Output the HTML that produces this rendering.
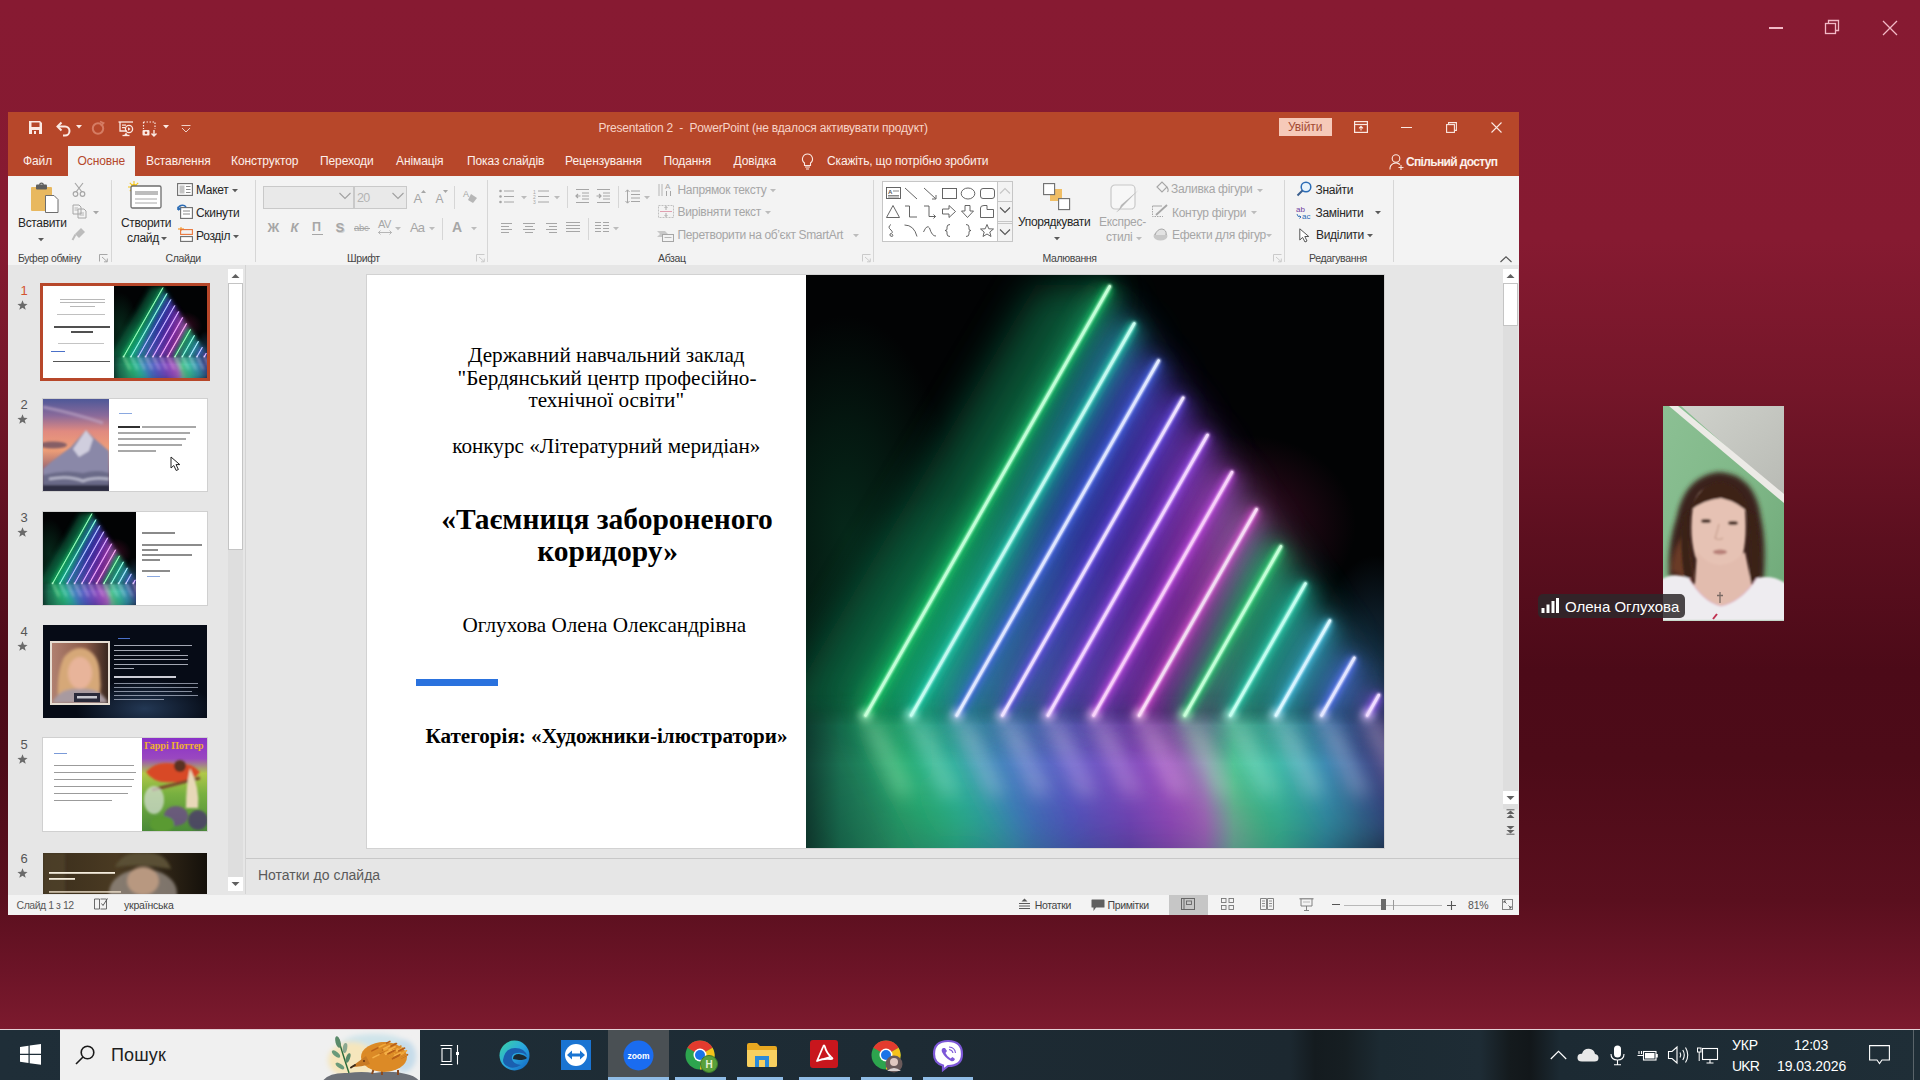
<!DOCTYPE html>
<html><head><meta charset="utf-8">
<style>
*{margin:0;padding:0;box-sizing:border-box}
html,body{width:1920px;height:1080px;overflow:hidden}
body{position:relative;font-family:"Liberation Sans",sans-serif;background:#861a31}
.a{position:absolute}
svg.a{overflow:visible}
.t{position:absolute;white-space:nowrap;line-height:1}
</style></head><body>
<div class="a" style="left:0px;top:0px;width:1920px;height:1030px;background:linear-gradient(180deg,#871a32 0px,#861a31 240px,#741629 390px,#5c0f1f 540px,#4c0a18 670px,#4d0b18 760px,#5a0f1e 900px,#6c1427 970px,#7c1a2e 1029px)"></div>
<div class="a" style="left:1769px;top:27px;width:14px;height:1.5px;background:#f2b9c6"></div>
<svg class="a" style="left:1824px;top:19px;" width="17" height="17" viewBox="0 0 17 17"><rect x="1.5" y="4.5" width="10" height="10" fill="none" stroke="#f2b9c6" stroke-width="1.3"/><path d="M4.5 4.5 V1.5 H14.5 V11.5 H11.5" fill="none" stroke="#f2b9c6" stroke-width="1.3"/></svg>
<svg class="a" style="left:1882px;top:20px;" width="16" height="16" viewBox="0 0 16 16"><path d="M1 1 L15 15 M15 1 L1 15" stroke="#f2b9c6" stroke-width="1.3"/></svg>
<div class="a" style="left:8px;top:112px;width:1511px;height:803px;background:#e6e6e6"></div>
<div class="a" style="left:8px;top:112px;width:1511px;height:64px;background:#b7472a"></div>
<svg class="a" style="left:28px;top:120px;" width="15" height="15" viewBox="0 0 15 15"><path d="M1 1 H12 L14 3 V14 H1 Z" fill="#fbe9e3"/><rect x="3.5" y="2.5" width="8" height="4.5" fill="#b7472a"/><rect x="4" y="10" width="7" height="4" fill="#b7472a"/><rect x="6" y="11" width="2" height="3" fill="#fbe9e3"/></svg>
<svg class="a" style="left:56px;top:121px;" width="15" height="15" viewBox="0 0 15 15"><path d="M2 5.5 H9 A4.5 4.5 0 0 1 9 14.5 H7" fill="none" stroke="#fbe9e3" stroke-width="2"/><path d="M5.5 1.5 L1.5 5.5 L5.5 9.5" fill="none" stroke="#fbe9e3" stroke-width="2"/></svg>
<svg class="a" style="left:76px;top:125px;" width="6" height="4" viewBox="0 0 6 4"><path d="M0 0 H6 L3 3.5 Z" fill="#fbe9e3"/></svg>
<svg class="a" style="left:91px;top:121px;opacity:.9" width="14" height="14" viewBox="0 0 14 14"><circle cx="7" cy="7.5" r="5.2" fill="none" stroke="#d9826a" stroke-width="2"/><path d="M9 0.5 L12.5 2 L10 5" fill="none" stroke="#d9826a" stroke-width="1.8"/></svg>
<svg class="a" style="left:118px;top:121px;" width="16" height="15" viewBox="0 0 16 15"><path d="M0.5 1 H15" stroke="#fbe9e3" stroke-width="1.3"/><path d="M2 1 V10 H9" fill="none" stroke="#fbe9e3" stroke-width="1.3"/><rect x="4" y="3.5" width="4" height="1.2" fill="#fbe9e3"/><rect x="4" y="6" width="3" height="1.2" fill="#fbe9e3"/><circle cx="11" cy="8" r="3.6" fill="none" stroke="#fbe9e3" stroke-width="1.3"/><path d="M10 6.3 L12.6 8 L10 9.7Z" fill="#fbe9e3"/><path d="M6 14.5 L8 11.5 L10 14.5 Z" fill="#fbe9e3"/><path d="M4.5 14.5 H11.5" stroke="#fbe9e3" stroke-width="1.3"/></svg>
<svg class="a" style="left:142px;top:121px;" width="16" height="15" viewBox="0 0 16 15"><path d="M1.5 1 V8 M1.5 1 H13 V8" fill="none" stroke="#fbe9e3" stroke-width="1.2" stroke-dasharray="1.5 1.5"/><rect x="0.5" y="9" width="7" height="5.5" rx="1" fill="#fbe9e3"/><circle cx="4" cy="11.8" r="1.3" fill="#b7472a"/><path d="M12 9 V15 M9.5 12.5 L12 15 L14.5 12.5" fill="none" stroke="#fbe9e3" stroke-width="1.4"/></svg>
<svg class="a" style="left:163px;top:125px;" width="6" height="4" viewBox="0 0 6 4"><path d="M0 0 H6 L3 3.5 Z" fill="#fbe9e3"/></svg>
<svg class="a" style="left:181px;top:125px;opacity:.85" width="10" height="8" viewBox="0 0 10 8"><path d="M0.5 0.5 H9.5" stroke="#fbe9e3" stroke-width="1"/><path d="M1 3 L5 7 L9 3" fill="none" stroke="#fbe9e3" stroke-width="1"/></svg>
<div class="t" style="left:598.5px;top:121.64px;font-size:12px;color:#f7d4c8;font-weight:400;font-family:'Liberation Sans';letter-spacing:-0.2px;">Presentation 2&nbsp; -&nbsp; PowerPoint (не вдалося активувати продукт)</div>
<div class="a" style="left:1279px;top:118px;width:53px;height:18px;background:#f6c9b9"></div>
<div class="t" style="left:1288px;top:121.34px;font-size:12px;color:#a34a33;font-weight:400;font-family:'Liberation Sans';letter-spacing:-0.1px;">Увійти</div>
<svg class="a" style="left:1354px;top:121px;" width="14" height="12" viewBox="0 0 14 12"><rect x="0.6" y="0.6" width="12.8" height="10.8" fill="none" stroke="#fbe9e3" stroke-width="1.2"/><path d="M0.6 3.5 H13.4" stroke="#fbe9e3" stroke-width="1.2"/><path d="M7 9.5 V5.5 M5 7.3 L7 5.3 L9 7.3" fill="none" stroke="#fbe9e3" stroke-width="1.1"/></svg>
<div class="a" style="left:1401px;top:127px;width:11px;height:1.2px;background:#fbe9e3"></div>
<svg class="a" style="left:1446px;top:122px;" width="11" height="11" viewBox="0 0 11 11"><rect x="0.6" y="2.6" width="7.8" height="7.8" fill="none" stroke="#fbe9e3" stroke-width="1.1"/><path d="M2.6 2.6 V0.6 H10.4 V8.4 H8.4" fill="none" stroke="#fbe9e3" stroke-width="1.1"/></svg>
<svg class="a" style="left:1491px;top:122px;" width="11" height="11" viewBox="0 0 11 11"><path d="M0.5 0.5 L10.5 10.5 M10.5 0.5 L0.5 10.5" stroke="#fbe9e3" stroke-width="1.1"/></svg>
<div class="a" style="left:68px;top:146px;width:67px;height:30px;background:#f3f3f3"></div>
<div class="t" style="left:23px;top:155.04px;font-size:12px;color:#fdf0ea;font-weight:400;font-family:'Liberation Sans';letter-spacing:-0.1px;">Файл</div>
<div class="t" style="left:77.5px;top:155.04px;font-size:12px;color:#b5482c;font-weight:400;font-family:'Liberation Sans';letter-spacing:-0.1px;">Основне</div>
<div class="t" style="left:146px;top:155.04px;font-size:12px;color:#fdf0ea;font-weight:400;font-family:'Liberation Sans';letter-spacing:-0.1px;">Вставлення</div>
<div class="t" style="left:231px;top:155.04px;font-size:12px;color:#fdf0ea;font-weight:400;font-family:'Liberation Sans';letter-spacing:-0.1px;">Конструктор</div>
<div class="t" style="left:320px;top:155.04px;font-size:12px;color:#fdf0ea;font-weight:400;font-family:'Liberation Sans';letter-spacing:-0.1px;">Переходи</div>
<div class="t" style="left:396px;top:155.04px;font-size:12px;color:#fdf0ea;font-weight:400;font-family:'Liberation Sans';letter-spacing:-0.1px;">Анімація</div>
<div class="t" style="left:467px;top:155.04px;font-size:12px;color:#fdf0ea;font-weight:400;font-family:'Liberation Sans';letter-spacing:-0.1px;">Показ слайдів</div>
<div class="t" style="left:565px;top:155.04px;font-size:12px;color:#fdf0ea;font-weight:400;font-family:'Liberation Sans';letter-spacing:-0.1px;">Рецензування</div>
<div class="t" style="left:663.5px;top:155.04px;font-size:12px;color:#fdf0ea;font-weight:400;font-family:'Liberation Sans';letter-spacing:-0.1px;">Подання</div>
<div class="t" style="left:733.5px;top:155.04px;font-size:12px;color:#fdf0ea;font-weight:400;font-family:'Liberation Sans';letter-spacing:-0.1px;">Довідка</div>
<div class="t" style="left:827px;top:155.04px;font-size:12px;color:#fdf0ea;font-weight:400;font-family:'Liberation Sans';letter-spacing:-0.15px;">Скажіть, що потрібно зробити</div>
<svg class="a" style="left:801px;top:153px;" width="13" height="17" viewBox="0 0 13 17"><path d="M6.5 1 A5 5 0 0 1 9.5 10 V12.5 H3.5 V10 A5 5 0 0 1 6.5 1 Z" fill="none" stroke="#fbe9e3" stroke-width="1.1"/><path d="M4 14 H9 M5 16 H8" stroke="#fbe9e3" stroke-width="1.1"/></svg>
<svg class="a" style="left:1389px;top:154px;" width="15" height="16" viewBox="0 0 15 16"><circle cx="7" cy="4.5" r="3.8" fill="none" stroke="#fbe9e3" stroke-width="1.1"/><path d="M1 15.5 A6 6 0 0 1 11 10.5" fill="none" stroke="#fbe9e3" stroke-width="1.1"/><path d="M9.5 13.5 H14.5 M12 11 V16" stroke="#fbe9e3" stroke-width="1.1"/></svg>
<div class="t" style="left:1406px;top:155.84px;font-size:12px;color:#fdf0ea;font-weight:700;font-family:'Liberation Sans';letter-spacing:-0.65px;">Спільний доступ</div>
<div class="a" style="left:8px;top:176px;width:1511px;height:89px;background:#f3f3f3"></div>
<svg class="a" style="left:30px;top:183px;" width="29" height="30" viewBox="0 0 29 30"><rect x="1" y="4" width="21" height="24" rx="1" fill="#e8b85f"/><rect x="6" y="1.5" width="11" height="5" rx="1" fill="#5e5e5e"/><circle cx="11.5" cy="2" r="1.8" fill="none" stroke="#5e5e5e" stroke-width="1.2"/><path d="M15.5 12.5 H24 L28 16.5 V29.5 H15.5 Z" fill="#fff" stroke="#6d6d6d" stroke-width="1"/></svg>
<div class="t" style="left:18px;top:216.64px;font-size:12px;color:#262626;font-weight:400;font-family:'Liberation Sans';letter-spacing:-0.35px;">Вставити</div>
<svg class="a" style="left:38px;top:237.5px;" width="6" height="4" viewBox="0 0 6 4"><path d="M0 0 H6 L3 3.3 Z" fill="#5a5a5a"/></svg>
<svg class="a" style="left:72px;top:182px;" width="14" height="15" viewBox="0 0 14 15"><path d="M3 1 L10 10 M11 1 L4 10" stroke="#a6a6a6" stroke-width="1.2"/><circle cx="3.5" cy="12" r="2.3" fill="none" stroke="#a6a6a6" stroke-width="1.2"/><circle cx="10.5" cy="12" r="2.3" fill="none" stroke="#a6a6a6" stroke-width="1.2"/></svg>
<svg class="a" style="left:72px;top:204px;" width="15" height="15" viewBox="0 0 15 15"><path d="M1 1 H7 L9 3 V10 H1 Z M6 5 H12 L14 7 V14 H6 Z" fill="#f3f3f3" stroke="#a6a6a6" stroke-width="1"/><path d="M2.5 4 H6 M2.5 6 H6 M7.5 9 H12 M7.5 11 H12" stroke="#a6a6a6" stroke-width="0.8"/></svg>
<svg class="a" style="left:93px;top:210.5px;" width="6" height="4" viewBox="0 0 6 4"><path d="M0 0 H6 L3 3.3 Z" fill="#a6a6a6"/></svg>
<svg class="a" style="left:72px;top:227px;opacity:.7" width="15" height="14" viewBox="0 0 15 14"><path d="M9 1 L13 5 L7 11 L3 7 Z" fill="#a6a6a6"/><path d="M3.5 7.5 L0.5 13" stroke="#a6a6a6" stroke-width="2"/></svg>
<div class="t" style="left:18px;top:253.11px;font-size:10.5px;color:#444444;font-weight:400;font-family:'Liberation Sans';letter-spacing:-0.35px;">Буфер обміну</div>
<svg class="a" style="left:99px;top:254px;opacity:.8" width="9" height="8" viewBox="0 0 9 8"><path d="M0.5 7.5 V0.5 H8.5" fill="none" stroke="#8a8a8a" stroke-width="0.9"/><path d="M3 3 L8 7.5 M8.3 4.5 V7.8 H5" fill="none" stroke="#8a8a8a" stroke-width="0.9"/></svg>
<div class="a" style="left:111px;top:180px;width:1px;height:82px;background:#d6d6d6"></div>
<svg class="a" style="left:126px;top:180px;" width="37" height="30" viewBox="0 0 37 30"><g fill="#f2c200"><circle cx="8" cy="7" r="3"/></g><path d="M8 1 V13 M2 7 H14 M3.8 2.8 L12.2 11.2 M12.2 2.8 L3.8 11.2" stroke="#f5c518" stroke-width="1.1"/><rect x="5" y="6" width="30" height="22" rx="1.5" fill="#fff" stroke="#6d6d6d" stroke-width="1.3"/><rect x="9" y="11" width="23" height="4" fill="#bdbdbd"/><path d="M9 19 H31 M9 23 H31" stroke="#a8a8a8" stroke-width="1"/></svg>
<div class="t" style="left:121px;top:216.84px;font-size:12px;color:#262626;font-weight:400;font-family:'Liberation Sans';letter-spacing:-0.3px;">Створити</div>
<div class="t" style="left:127px;top:232.24px;font-size:12px;color:#262626;font-weight:400;font-family:'Liberation Sans';letter-spacing:-0.3px;">слайд</div>
<svg class="a" style="left:161px;top:236.5px;" width="6" height="4" viewBox="0 0 6 4"><path d="M0 0 H6 L3 3.3 Z" fill="#5a5a5a"/></svg>
<svg class="a" style="left:177px;top:183px;" width="16" height="13" viewBox="0 0 16 13"><rect x="0.6" y="0.6" width="14.8" height="11.8" fill="#fff" stroke="#6d6d6d" stroke-width="1.1"/><rect x="2.5" y="2.5" width="5" height="8" fill="#c4c4c4"/><path d="M9 3.5 H13.5 M9 6.5 H13.5 M9 9.5 H13.5" stroke="#8a8a8a" stroke-width="1"/></svg>
<div class="t" style="left:196px;top:184.04px;font-size:12px;color:#262626;font-weight:400;font-family:'Liberation Sans';letter-spacing:-0.3px;">Макет</div>
<svg class="a" style="left:231.5px;top:188.5px;" width="6" height="4" viewBox="0 0 6 4"><path d="M0 0 H6 L3 3.3 Z" fill="#5a5a5a"/></svg>
<svg class="a" style="left:177px;top:204px;" width="16" height="15" viewBox="0 0 16 15"><rect x="3.6" y="3.6" width="11.8" height="10.8" fill="#fff" stroke="#6d6d6d" stroke-width="1.1"/><path d="M6 7 H13 M6 10 H13" stroke="#8a8a8a" stroke-width="1"/><path d="M1 6 A4.5 4.5 0 0 1 9 3" fill="none" stroke="#2b6cb5" stroke-width="1.6"/><path d="M0 2.5 L1.2 6.8 L4.5 5" fill="#2b6cb5"/></svg>
<div class="t" style="left:196px;top:206.84px;font-size:12px;color:#262626;font-weight:400;font-family:'Liberation Sans';letter-spacing:-0.3px;">Скинути</div>
<svg class="a" style="left:177px;top:227px;" width="16" height="15" viewBox="0 0 16 15"><path d="M1 2 H7" stroke="#f29b30" stroke-width="1.2"/><path d="M4 0 V4" stroke="#f29b30" stroke-width="1.1"/><rect x="3.6" y="2.6" width="11.8" height="4.8" fill="none" stroke="#e8763a" stroke-width="1.1"/><rect x="3.6" y="9.6" width="11.8" height="4.8" fill="#fff" stroke="#6d6d6d" stroke-width="1.1"/></svg>
<div class="t" style="left:196px;top:229.64px;font-size:12px;color:#262626;font-weight:400;font-family:'Liberation Sans';letter-spacing:-0.3px;">Розділ</div>
<svg class="a" style="left:233px;top:234.5px;" width="6" height="4" viewBox="0 0 6 4"><path d="M0 0 H6 L3 3.3 Z" fill="#5a5a5a"/></svg>
<div class="t" style="left:165.5px;top:253.11px;font-size:10.5px;color:#444444;font-weight:400;font-family:'Liberation Sans';letter-spacing:-0.35px;">Слайди</div>
<div class="a" style="left:254.5px;top:180px;width:1px;height:82px;background:#d6d6d6"></div>
<div class="a" style="left:263px;top:186px;width:91px;height:23px;background:#e9e9e9;border:1px solid #c9c9c9"></div>
<div class="a" style="left:354px;top:186px;width:53px;height:23px;background:#e9e9e9;border:1px solid #c9c9c9;border-left:none"></div>
<div class="a" style="left:354px;top:187px;width:1px;height:21px;background:#c9c9c9"></div>
<svg class="a" style="left:339px;top:192px;" width="12" height="8" viewBox="0 0 12 8"><path d="M0.5 1 L6 6.5 L11.5 1" fill="none" stroke="#a0a0a0" stroke-width="1.1"/></svg>
<svg class="a" style="left:392px;top:192px;" width="12" height="8" viewBox="0 0 12 8"><path d="M0.5 1 L6 6.5 L11.5 1" fill="none" stroke="#a0a0a0" stroke-width="1.1"/></svg>
<div class="t" style="left:357px;top:192.42px;font-size:12.5px;color:#b4b4b4;font-weight:400;font-family:'Liberation Sans';letter-spacing:-0.6px;">20</div>
<div class="t" style="left:413.5px;top:192.00px;font-size:13px;color:#a6a6a6;font-weight:400;font-family:'Liberation Sans';">A</div>
<svg class="a" style="left:421px;top:190px;" width="5" height="3" viewBox="0 0 5 3"><path d="M0 3 L2.5 0 L5 3Z" fill="#a6a6a6"/></svg>
<div class="t" style="left:435.5px;top:192.84px;font-size:12px;color:#a6a6a6;font-weight:400;font-family:'Liberation Sans';">A</div>
<svg class="a" style="left:443px;top:190px;" width="5" height="3" viewBox="0 0 5 3"><path d="M0 0 L2.5 3 L5 0Z" fill="#a6a6a6"/></svg>
<div class="a" style="left:454px;top:186px;width:1px;height:23px;background:#d6d6d6"></div>
<svg class="a" style="left:463px;top:189px;" width="15" height="15" viewBox="0 0 15 15"><text x="0" y="8" font-size="9" fill="#a6a6a6" font-family="Liberation Sans">A</text><path d="M8 5 L14 9 L10 14 L5 11 Z" fill="#a6a6a6" opacity=".8"/></svg>
<div class="t" style="left:267.5px;top:221.00px;font-size:13px;color:#a6a6a6;font-weight:700;font-family:'Liberation Sans';">Ж</div>
<div class="t" style="left:290.5px;top:221.00px;font-size:13px;color:#a6a6a6;font-weight:700;font-family:'Liberation Sans';font-style:italic">К</div>
<div class="t" style="left:312px;top:220.92px;font-size:12.5px;color:#a6a6a6;font-weight:700;font-family:'Liberation Sans';">П</div>
<div class="a" style="left:312px;top:233.5px;width:11px;height:1px;background:#a6a6a6"></div>
<div class="t" style="left:335.5px;top:221.00px;font-size:13px;color:#a6a6a6;font-weight:700;font-family:'Liberation Sans';text-shadow:1px 1px 0 #d0d0d0">S</div>
<div class="t" style="left:354px;top:222.96px;font-size:9.5px;color:#a6a6a6;font-weight:400;font-family:'Liberation Sans';letter-spacing:-0.3px;">abc</div>
<div class="a" style="left:354px;top:227.5px;width:16px;height:1px;background:#a6a6a6"></div>
<div class="t" style="left:378px;top:219.19px;font-size:11px;color:#a6a6a6;font-weight:400;font-family:'Liberation Sans';letter-spacing:-0.5px;">AV</div>
<svg class="a" style="left:378px;top:230px;" width="14" height="5" viewBox="0 0 14 5"><path d="M0.5 2.5 H13.5 M2.5 0.5 L0.5 2.5 L2.5 4.5 M11.5 0.5 L13.5 2.5 L11.5 4.5" fill="none" stroke="#a6a6a6" stroke-width="0.8"/></svg>
<svg class="a" style="left:395px;top:226.5px;" width="6" height="4" viewBox="0 0 6 4"><path d="M0 0 H6 L3 3.3 Z" fill="#bcbcbc"/></svg>
<div class="t" style="left:410px;top:221.00px;font-size:13px;color:#a6a6a6;font-weight:400;font-family:'Liberation Sans';letter-spacing:-0.8px;">Aa</div>
<svg class="a" style="left:429px;top:226.5px;" width="6" height="4" viewBox="0 0 6 4"><path d="M0 0 H6 L3 3.3 Z" fill="#bcbcbc"/></svg>
<div class="a" style="left:442px;top:218px;width:1px;height:22px;background:#d6d6d6"></div>
<div class="t" style="left:452px;top:219.65px;font-size:14px;color:#a6a6a6;font-weight:700;font-family:'Liberation Sans';">A</div>
<svg class="a" style="left:471px;top:226.5px;" width="6" height="4" viewBox="0 0 6 4"><path d="M0 0 H6 L3 3.3 Z" fill="#bcbcbc"/></svg>
<div class="t" style="left:347px;top:252.71px;font-size:10.5px;color:#444444;font-weight:400;font-family:'Liberation Sans';letter-spacing:-0.35px;">Шрифт</div>
<svg class="a" style="left:476px;top:254px;opacity:.8" width="9" height="8" viewBox="0 0 9 8"><path d="M0.5 7.5 V0.5 H8.5" fill="none" stroke="#bbbbbb" stroke-width="0.9"/><path d="M3 3 L8 7.5 M8.3 4.5 V7.8 H5" fill="none" stroke="#bbbbbb" stroke-width="0.9"/></svg>
<div class="a" style="left:487px;top:180px;width:1px;height:82px;background:#d6d6d6"></div>
<svg class="a" style="left:499px;top:189px;" width="16" height="15" viewBox="0 0 16 15"><g fill="#a6a6a6"><circle cx="1.5" cy="2" r="1.3"/><circle cx="1.5" cy="7.5" r="1.3"/><circle cx="1.5" cy="13" r="1.3"/></g><path d="M5 2 H15 M5 7.5 H15 M5 13 H15" stroke="#a6a6a6" stroke-width="1"/></svg>
<svg class="a" style="left:521px;top:195.5px;" width="6" height="4" viewBox="0 0 6 4"><path d="M0 0 H6 L3 3.3 Z" fill="#bcbcbc"/></svg>
<svg class="a" style="left:533px;top:189px;" width="17" height="15" viewBox="0 0 17 15"><text x="0" y="4.5" font-size="5" fill="#a6a6a6">1</text><text x="0" y="10" font-size="5" fill="#a6a6a6">2</text><text x="0" y="15" font-size="5" fill="#a6a6a6">3</text><path d="M5 2 H16 M5 7.5 H16 M5 13 H16" stroke="#a6a6a6" stroke-width="1"/></svg>
<svg class="a" style="left:554px;top:195.5px;" width="6" height="4" viewBox="0 0 6 4"><path d="M0 0 H6 L3 3.3 Z" fill="#bcbcbc"/></svg>
<div class="a" style="left:567px;top:186px;width:1px;height:22px;background:#d6d6d6"></div>
<svg class="a" style="left:575px;top:189px;" width="15" height="14" viewBox="0 0 15 14"><path d="M1 0.5 H14 M7 4 H14 M7 7 H14 M7 10 H14 M1 13.5 H14" stroke="#a6a6a6" stroke-width="1"/><path d="M5.5 7 H1 M3 5 L1 7 L3 9" fill="none" stroke="#a6a6a6" stroke-width="1.2"/></svg>
<svg class="a" style="left:596px;top:189px;" width="15" height="14" viewBox="0 0 15 14"><path d="M1 0.5 H14 M7 4 H14 M7 7 H14 M7 10 H14 M1 13.5 H14" stroke="#a6a6a6" stroke-width="1"/><path d="M0.5 7 H5 M3 5 L5 7 L3 9" fill="none" stroke="#a6a6a6" stroke-width="1.2"/></svg>
<div class="a" style="left:618px;top:186px;width:1px;height:22px;background:#d6d6d6"></div>
<svg class="a" style="left:625px;top:189px;" width="15" height="15" viewBox="0 0 15 15"><path d="M6 2 H15 M6 5.5 H15 M6 9 H15 M6 12.5 H15" stroke="#a6a6a6" stroke-width="1"/><path d="M2.5 1 V14 M0.5 3 L2.5 0.8 L4.5 3 M0.5 12 L2.5 14.2 L4.5 12" fill="none" stroke="#a6a6a6" stroke-width="1"/></svg>
<svg class="a" style="left:644px;top:195.5px;" width="6" height="4" viewBox="0 0 6 4"><path d="M0 0 H6 L3 3.3 Z" fill="#bcbcbc"/></svg>
<svg class="a" style="left:501px;top:223px;" width="12" height="10" viewBox="0 0 12 10"><path d="M0 0.5 H11 M0 3.5 H8 M0 6.5 H11 M0 9.5 H8" stroke="#a6a6a6" stroke-width="1"/></svg>
<svg class="a" style="left:523px;top:223px;" width="12" height="10" viewBox="0 0 12 10"><path d="M0 0.5 H12 M2 3.5 H10 M0 6.5 H12 M2 9.5 H10" stroke="#a6a6a6" stroke-width="1"/></svg>
<svg class="a" style="left:545px;top:223px;" width="12" height="10" viewBox="0 0 12 10"><path d="M1 0.5 H12 M4 3.5 H12 M1 6.5 H12 M4 9.5 H12" stroke="#a6a6a6" stroke-width="1"/></svg>
<svg class="a" style="left:566px;top:222px;" width="14" height="12" viewBox="0 0 14 12"><path d="M0 0.5 H14 M0 3.5 H14 M0 6.5 H14 M0 9.5 H14" stroke="#a6a6a6" stroke-width="1"/></svg>
<div class="a" style="left:588px;top:218px;width:1px;height:22px;background:#d6d6d6"></div>
<svg class="a" style="left:595px;top:222px;" width="14" height="12" viewBox="0 0 14 12"><path d="M0 0.5 H6 M8 0.5 H14 M0 3.5 H6 M8 3.5 H14 M0 6.5 H6 M8 6.5 H14 M0 9.5 H6 M8 9.5 H14" stroke="#a6a6a6" stroke-width="1"/></svg>
<svg class="a" style="left:613px;top:226.5px;" width="6" height="4" viewBox="0 0 6 4"><path d="M0 0 H6 L3 3.3 Z" fill="#bcbcbc"/></svg>
<svg class="a" style="left:658px;top:181px;" width="16" height="16" viewBox="0 0 16 16"><path d="M1 3 V15 M4 3 V15" stroke="#c0c0c0" stroke-width="1.2"/><text x="7" y="8" font-size="8" fill="#a6a6a6">A</text><path d="M8.5 10 V15 M12.5 10 V15" stroke="#a6a6a6" stroke-width="1"/></svg>
<div class="t" style="left:677.5px;top:183.84px;font-size:12px;color:#a6a6a6;font-weight:400;font-family:'Liberation Sans';letter-spacing:-0.3px;">Напрямок тексту</div>
<svg class="a" style="left:770px;top:188.5px;" width="6" height="4" viewBox="0 0 6 4"><path d="M0 0 H6 L3 3.3 Z" fill="#bcbcbc"/></svg>
<svg class="a" style="left:658px;top:205px;" width="16" height="13" viewBox="0 0 16 13"><rect x="0.5" y="0.5" width="15" height="12" fill="none" stroke="#c0c0c0" stroke-width="1" stroke-dasharray="2 1"/><path d="M2 6.5 H14" stroke="#e0a0b0" stroke-width="1"/><path d="M8 1.5 V5 M6.5 3 L8 1.5 L9.5 3 M8 8 V11.5 M6.5 10 L8 11.5 L9.5 10" fill="none" stroke="#a6a6a6" stroke-width="0.9"/></svg>
<div class="t" style="left:677.5px;top:206.44px;font-size:12px;color:#a6a6a6;font-weight:400;font-family:'Liberation Sans';letter-spacing:-0.3px;">Вирівняти текст</div>
<svg class="a" style="left:765px;top:210.5px;" width="6" height="4" viewBox="0 0 6 4"><path d="M0 0 H6 L3 3.3 Z" fill="#bcbcbc"/></svg>
<svg class="a" style="left:657px;top:229px;" width="17" height="13" viewBox="0 0 17 13"><path d="M0 2 H8 L11 5 L8 8 H0 L3 5 Z" fill="#c8c8c8"/><rect x="5.5" y="5.5" width="11" height="7" fill="#f3f3f3" stroke="#a6a6a6" stroke-width="1"/><path d="M7.5 8.5 H14.5" stroke="#a6a6a6" stroke-width="0.8"/></svg>
<div class="t" style="left:677.5px;top:228.84px;font-size:12px;color:#a6a6a6;font-weight:400;font-family:'Liberation Sans';letter-spacing:-0.35px;">Перетворити на об’єкт SmartArt</div>
<svg class="a" style="left:853px;top:233.5px;" width="6" height="4" viewBox="0 0 6 4"><path d="M0 0 H6 L3 3.3 Z" fill="#bcbcbc"/></svg>
<div class="t" style="left:658px;top:253.11px;font-size:10.5px;color:#444444;font-weight:400;font-family:'Liberation Sans';letter-spacing:-0.35px;">Абзац</div>
<svg class="a" style="left:862px;top:254px;opacity:.8" width="9" height="8" viewBox="0 0 9 8"><path d="M0.5 7.5 V0.5 H8.5" fill="none" stroke="#bbbbbb" stroke-width="0.9"/><path d="M3 3 L8 7.5 M8.3 4.5 V7.8 H5" fill="none" stroke="#bbbbbb" stroke-width="0.9"/></svg>
<div class="a" style="left:873px;top:180px;width:1px;height:82px;background:#d6d6d6"></div>
<div class="a" style="left:882px;top:181px;width:131px;height:61px;background:#fff;border:1px solid #c6c6c6"></div>
<div class="a" style="left:997px;top:181px;width:16px;height:61px;background:#f3f3f3;border:1px solid #c6c6c6"></div>
<div class="a" style="left:997px;top:201px;width:16px;height:1px;background:#c6c6c6"></div>
<div class="a" style="left:997px;top:221px;width:16px;height:1px;background:#c6c6c6"></div>
<div class="a" style="left:997px;top:223px;width:16px;height:1px;background:#c6c6c6"></div>
<svg class="a" style="left:999px;top:187px;" width="12" height="8" viewBox="0 0 12 8"><path d="M1 6.5 L6 1.5 L11 6.5" fill="none" stroke="#c6c6c6" stroke-width="1.1"/></svg>
<svg class="a" style="left:999px;top:206px;" width="12" height="8" viewBox="0 0 12 8"><path d="M1 1.5 L6 6.5 L11 1.5" fill="none" stroke="#555" stroke-width="1.1"/></svg>
<svg class="a" style="left:999px;top:228px;" width="12" height="8" viewBox="0 0 12 8"><path d="M1 1.5 L6 6.5 L11 1.5" fill="none" stroke="#555" stroke-width="1.1"/></svg>
<svg class="a" style="left:885.5px;top:187px;" width="15" height="13" viewBox="0 0 15 13"><rect x="0.5" y="0.5" width="14" height="11" fill="none" stroke="#555555" stroke-width="0.9"/><text x="2" y="6.5" font-size="6" fill="#555555" font-weight="700">A</text><path d="M7 4 H13 M2 8.5 H13 M2 10 H13" stroke="#555555" stroke-width="0.7"/></svg>
<svg class="a" style="left:885.5px;top:205px;" width="15" height="14" viewBox="0 0 15 14"><path d="M7 0.5 L13.5 12.5 H0.5 Z" fill="none" stroke="#555555" stroke-width="0.9"/></svg>
<svg class="a" style="left:885.5px;top:224px;" width="15" height="14" viewBox="0 0 15 14"><path d="M5 0.5 Q1 3 5 6 Q8 9 4 10 Q3 12 6 12.5 Q8 12 6 10" fill="none" stroke="#555555" stroke-width="0.9"/></svg>
<svg class="a" style="left:904px;top:187px;" width="15" height="13" viewBox="0 0 15 13"><path d="M1 1 L13 12" stroke="#555555" stroke-width="0.9"/></svg>
<svg class="a" style="left:904px;top:205px;" width="15" height="14" viewBox="0 0 15 14"><path d="M1 1 H5.5 V12 H13" fill="none" stroke="#555555" stroke-width="0.9"/></svg>
<svg class="a" style="left:904px;top:224px;" width="15" height="14" viewBox="0 0 15 14"><path d="M0.5 1 Q10 1 13 12.5" fill="none" stroke="#555555" stroke-width="0.9"/></svg>
<svg class="a" style="left:923px;top:187px;" width="15" height="13" viewBox="0 0 15 13"><path d="M1 1 L12.5 11.5" stroke="#555555" stroke-width="0.9"/><path d="M9 12 H13 V8" fill="none" stroke="#555555" stroke-width="0.9"/></svg>
<svg class="a" style="left:923px;top:205px;" width="15" height="14" viewBox="0 0 15 14"><path d="M1 1 H6 V11.5 H12.5 M10.5 9.5 L12.5 11.5 L10.5 13.5" fill="none" stroke="#555555" stroke-width="0.9"/></svg>
<svg class="a" style="left:923px;top:224px;" width="15" height="14" viewBox="0 0 15 14"><path d="M0.5 8 Q4 0 6.5 4 Q9 12.5 13 12" fill="none" stroke="#555555" stroke-width="0.9"/></svg>
<svg class="a" style="left:941.75px;top:187px;" width="15" height="13" viewBox="0 0 15 13"><rect x="0.5" y="1.5" width="14" height="10" fill="none" stroke="#555555" stroke-width="0.9"/></svg>
<svg class="a" style="left:941.75px;top:205px;" width="15" height="14" viewBox="0 0 15 14"><path d="M0.5 4 H7 V0.5 L13.5 6.5 L7 12.5 V9 H0.5 Z" fill="none" stroke="#555555" stroke-width="0.9"/></svg>
<svg class="a" style="left:941.75px;top:224px;" width="15" height="14" viewBox="0 0 15 14"><path d="M8 0.5 Q5 0.5 5 3 V5 Q5 6.5 3 6.5 Q5 6.5 5 8 V10 Q5 12.5 8 12.5" fill="none" stroke="#555555" stroke-width="0.9"/></svg>
<svg class="a" style="left:961px;top:187px;" width="15" height="13" viewBox="0 0 15 13"><ellipse cx="7" cy="6.5" rx="6.8" ry="5.5" fill="none" stroke="#555555" stroke-width="0.9"/></svg>
<svg class="a" style="left:961px;top:205px;" width="15" height="14" viewBox="0 0 15 14"><path d="M4 0.5 H9 V6 H12.5 L6.5 12.5 L0.5 6 H4 Z" fill="none" stroke="#555555" stroke-width="0.9"/></svg>
<svg class="a" style="left:961px;top:224px;" width="15" height="14" viewBox="0 0 15 14"><path d="M5 0.5 Q8 0.5 8 3 V5 Q8 6.5 10 6.5 Q8 6.5 8 8 V10 Q8 12.5 5 12.5" fill="none" stroke="#555555" stroke-width="0.9"/></svg>
<svg class="a" style="left:980px;top:187px;" width="15" height="13" viewBox="0 0 15 13"><rect x="0.5" y="1.5" width="14" height="10" rx="2.5" fill="none" stroke="#555555" stroke-width="0.9"/></svg>
<svg class="a" style="left:980px;top:205px;" width="15" height="14" viewBox="0 0 15 14"><path d="M0.5 12.5 V3 Q0.5 0.5 4 0.5 H7 V4.5 H13.5 V12.5 Z" fill="none" stroke="#555555" stroke-width="0.9"/></svg>
<svg class="a" style="left:980px;top:224px;" width="15" height="14" viewBox="0 0 15 14"><path d="M7 0.5 L8.8 4.8 L13.5 5 L9.8 8 L11 12.5 L7 10 L3 12.5 L4.2 8 L0.5 5 L5.2 4.8 Z" fill="none" stroke="#555555" stroke-width="0.9"/></svg>
<svg class="a" style="left:1043px;top:183px;" width="28" height="28" viewBox="0 0 28 28"><rect x="7" y="6" width="12" height="12" fill="#f0be65"/><rect x="0.6" y="0.6" width="11" height="11" fill="#fff" stroke="#6d6d6d" stroke-width="1.1"/><rect x="15.6" y="15.6" width="11" height="11" fill="#fff" stroke="#6d6d6d" stroke-width="1.1"/></svg>
<div class="t" style="left:1018px;top:216.44px;font-size:12px;color:#262626;font-weight:400;font-family:'Liberation Sans';letter-spacing:-0.35px;">Упорядкувати</div>
<svg class="a" style="left:1054px;top:236.5px;" width="6" height="4" viewBox="0 0 6 4"><path d="M0 0 H6 L3 3.3 Z" fill="#5a5a5a"/></svg>
<svg class="a" style="left:1110px;top:184px;" width="30" height="29" viewBox="0 0 30 29"><rect x="1" y="1" width="24" height="24" rx="4" fill="#f7f7f7" stroke="#c8c8c8" stroke-width="1.2"/><path d="M28.5 6 L13 22 Q9 27 6 28.5 Q10 25 11 21 Z" fill="#b8b8b8"/></svg>
<div class="t" style="left:1099px;top:216.44px;font-size:12px;color:#a6a6a6;font-weight:400;font-family:'Liberation Sans';letter-spacing:-0.3px;">Експрес-</div>
<div class="t" style="left:1106px;top:231.44px;font-size:12px;color:#a6a6a6;font-weight:400;font-family:'Liberation Sans';letter-spacing:-0.3px;">стилі</div>
<svg class="a" style="left:1136px;top:236.5px;" width="6" height="4" viewBox="0 0 6 4"><path d="M0 0 H6 L3 3.3 Z" fill="#bcbcbc"/></svg>
<svg class="a" style="left:1154px;top:181px;" width="15" height="14" viewBox="0 0 15 14"><path d="M3 6 L8 1 L13 6 L8 11 Z" fill="none" stroke="#a6a6a6" stroke-width="1.1"/><path d="M13 6 Q15 9 13.5 11" fill="none" stroke="#a6a6a6" stroke-width="1.1"/></svg>
<div class="t" style="left:1171px;top:182.84px;font-size:12px;color:#a6a6a6;font-weight:400;font-family:'Liberation Sans';letter-spacing:-0.3px;">Заливка фігури</div>
<svg class="a" style="left:1257px;top:188.5px;" width="6" height="4" viewBox="0 0 6 4"><path d="M0 0 H6 L3 3.3 Z" fill="#bcbcbc"/></svg>
<svg class="a" style="left:1152px;top:204px;" width="16" height="13" viewBox="0 0 16 13"><path d="M0.5 2 V12.5 H11" fill="none" stroke="#a6a6a6" stroke-width="1" stroke-dasharray="1.5 1"/><path d="M0.5 2 H10" stroke="#a6a6a6" stroke-width="1"/><path d="M4 11 L15 1" stroke="#a6a6a6" stroke-width="1.8"/></svg>
<div class="t" style="left:1172px;top:206.84px;font-size:12px;color:#a6a6a6;font-weight:400;font-family:'Liberation Sans';letter-spacing:-0.3px;">Контур фігури</div>
<svg class="a" style="left:1251px;top:210.5px;" width="6" height="4" viewBox="0 0 6 4"><path d="M0 0 H6 L3 3.3 Z" fill="#bcbcbc"/></svg>
<svg class="a" style="left:1153px;top:228px;" width="15" height="13" viewBox="0 0 15 13"><ellipse cx="7.5" cy="8" rx="7" ry="4.5" fill="#c8c8c8"/><path d="M2 7 Q4 1 9 1 Q14 2 13 7" fill="#e2e2e2" stroke="#a6a6a6" stroke-width="1"/></svg>
<div class="t" style="left:1172px;top:228.84px;font-size:12px;color:#a6a6a6;font-weight:400;font-family:'Liberation Sans';letter-spacing:-0.3px;">Ефекти для фігур</div>
<svg class="a" style="left:1266px;top:233.5px;" width="6" height="4" viewBox="0 0 6 4"><path d="M0 0 H6 L3 3.3 Z" fill="#bcbcbc"/></svg>
<div class="t" style="left:1042.5px;top:253.11px;font-size:10.5px;color:#444444;font-weight:400;font-family:'Liberation Sans';letter-spacing:-0.35px;">Малювання</div>
<svg class="a" style="left:1273px;top:254px;opacity:.8" width="9" height="8" viewBox="0 0 9 8"><path d="M0.5 7.5 V0.5 H8.5" fill="none" stroke="#bbbbbb" stroke-width="0.9"/><path d="M3 3 L8 7.5 M8.3 4.5 V7.8 H5" fill="none" stroke="#bbbbbb" stroke-width="0.9"/></svg>
<div class="a" style="left:1284px;top:180px;width:1px;height:82px;background:#d6d6d6"></div>
<svg class="a" style="left:1296px;top:181px;" width="16" height="16" viewBox="0 0 16 16"><circle cx="10" cy="6" r="4.8" fill="#e8f3fb" stroke="#2b6cb5" stroke-width="1.5"/><path d="M6.5 9.5 L1.5 14.5" stroke="#3b5f8f" stroke-width="2"/></svg>
<div class="t" style="left:1315.5px;top:183.84px;font-size:12px;color:#262626;font-weight:400;font-family:'Liberation Sans';letter-spacing:-0.3px;">Знайти</div>
<svg class="a" style="left:1296px;top:205px;" width="17" height="14" viewBox="0 0 17 14"><text x="0" y="6.5" font-size="8" fill="#7040a0" font-family="Liberation Sans">ab</text><text x="6" y="13.5" font-size="8" fill="#2b6cb5" font-family="Liberation Sans">ac</text><path d="M1 9 Q1 12 5 12 M3.5 10.5 L5 12 L3.5 13.5" fill="none" stroke="#2b6cb5" stroke-width="0.9"/></svg>
<div class="t" style="left:1315.5px;top:206.84px;font-size:12px;color:#262626;font-weight:400;font-family:'Liberation Sans';letter-spacing:-0.3px;">Замінити</div>
<svg class="a" style="left:1375px;top:210.5px;" width="6" height="4" viewBox="0 0 6 4"><path d="M0 0 H6 L3 3.3 Z" fill="#5a5a5a"/></svg>
<svg class="a" style="left:1299px;top:228px;" width="11" height="15" viewBox="0 0 11 15"><path d="M0.8 0.8 V12 L3.6 9.4 L6 14 L8 13 L5.8 8.5 H9.8 Z" fill="#fff" stroke="#555" stroke-width="1"/></svg>
<div class="t" style="left:1316px;top:228.84px;font-size:12px;color:#262626;font-weight:400;font-family:'Liberation Sans';letter-spacing:-0.3px;">Виділити</div>
<svg class="a" style="left:1367px;top:233.5px;" width="6" height="4" viewBox="0 0 6 4"><path d="M0 0 H6 L3 3.3 Z" fill="#5a5a5a"/></svg>
<div class="t" style="left:1309px;top:253.11px;font-size:10.5px;color:#444444;font-weight:400;font-family:'Liberation Sans';letter-spacing:-0.35px;">Редагування</div>
<div class="a" style="left:1392.5px;top:180px;width:1px;height:82px;background:#d6d6d6"></div>
<svg class="a" style="left:1500px;top:256px;" width="12" height="7" viewBox="0 0 12 7"><path d="M0.5 6 L6 0.8 L11.5 6" fill="none" stroke="#555" stroke-width="1.1"/></svg>
<svg width="0" height="0" style="position:absolute"><defs><filter id="b20" filterUnits="userSpaceOnUse" x="-100" y="-100" width="800" height="800"><feGaussianBlur stdDeviation="18"/></filter><filter id="b10" filterUnits="userSpaceOnUse" x="-100" y="-100" width="800" height="800"><feGaussianBlur stdDeviation="9"/></filter><filter id="b4" filterUnits="userSpaceOnUse" x="-100" y="-100" width="800" height="800"><feGaussianBlur stdDeviation="3.5"/></filter><filter id="b2" filterUnits="userSpaceOnUse" x="-100" y="-100" width="800" height="800"><feGaussianBlur stdDeviation="1.3"/></filter><radialGradient id="gGreen"><stop offset="0" stop-color="#0e5a3a" stop-opacity="1"/><stop offset="0.5" stop-color="#0e5a3a" stop-opacity="0.55"/><stop offset="1" stop-color="#0e5a3a" stop-opacity="0"/></radialGradient><radialGradient id="gGreen2"><stop offset="0" stop-color="#06281a" stop-opacity="1"/><stop offset="0.5" stop-color="#06281a" stop-opacity="0.55"/><stop offset="1" stop-color="#06281a" stop-opacity="0"/></radialGradient><radialGradient id="gBlue"><stop offset="0" stop-color="#2a2ab8" stop-opacity="0.9"/><stop offset="0.5" stop-color="#2a2ab8" stop-opacity="0.49500000000000005"/><stop offset="1" stop-color="#2a2ab8" stop-opacity="0"/></radialGradient><radialGradient id="gPurp"><stop offset="0" stop-color="#7a2aa8" stop-opacity="0.8"/><stop offset="0.5" stop-color="#7a2aa8" stop-opacity="0.44000000000000006"/><stop offset="1" stop-color="#7a2aa8" stop-opacity="0"/></radialGradient><radialGradient id="gRed"><stop offset="0" stop-color="#3a0c22" stop-opacity="0.9"/><stop offset="0.5" stop-color="#3a0c22" stop-opacity="0.49500000000000005"/><stop offset="1" stop-color="#3a0c22" stop-opacity="0"/></radialGradient><radialGradient id="gTeal"><stop offset="0" stop-color="#1a7a66" stop-opacity="0.8"/><stop offset="0.5" stop-color="#1a7a66" stop-opacity="0.44000000000000006"/><stop offset="1" stop-color="#1a7a66" stop-opacity="0"/></radialGradient><radialGradient id="gSlate"><stop offset="0" stop-color="#1a3a50" stop-opacity="0.8"/><stop offset="0.5" stop-color="#1a3a50" stop-opacity="0.44000000000000006"/><stop offset="1" stop-color="#1a3a50" stop-opacity="0"/></radialGradient><radialGradient id="gHor"><stop offset="0" stop-color="#8ae0d0" stop-opacity="0.55"/><stop offset="0.5" stop-color="#8ae0d0" stop-opacity="0.30250000000000005"/><stop offset="1" stop-color="#8ae0d0" stop-opacity="0"/></radialGradient><linearGradient id="floorg" x1="0" y1="0" x2="1" y2="0"><stop offset="0" stop-color="#103e32"/><stop offset="0.06" stop-color="#1a7052"/><stop offset="0.16" stop-color="#2a9a6c"/><stop offset="0.26" stop-color="#30a08c"/><stop offset="0.36" stop-color="#3a86a8"/><stop offset="0.46" stop-color="#4660b0"/><stop offset="0.56" stop-color="#5a48a8"/><stop offset="0.63" stop-color="#7a50b0"/><stop offset="0.69" stop-color="#8a70b8"/><stop offset="0.74" stop-color="#58b898"/><stop offset="0.82" stop-color="#40a898"/><stop offset="0.9" stop-color="#2e7090"/><stop offset="0.96" stop-color="#23405a"/><stop offset="1" stop-color="#1a2a3a"/></linearGradient><linearGradient id="floorm" x1="0" y1="0" x2="0" y2="1"><stop offset="0" stop-color="#fff" stop-opacity="0"/><stop offset="0.1" stop-color="#fff" stop-opacity="0.2"/><stop offset="0.2" stop-color="#fff" stop-opacity="0.8"/><stop offset="0.45" stop-color="#fff" stop-opacity="1"/><stop offset="1" stop-color="#fff" stop-opacity="0.85"/></linearGradient><mask id="fmask" maskUnits="userSpaceOnUse" x="0" y="420" width="578" height="153"><rect x="0" y="420" width="578" height="153" fill="url(#floorm)"/></mask></defs><symbol id="neon" viewBox="0 0 578 573" preserveAspectRatio="none"><rect width="578" height="573" fill="#020304"/><ellipse cx="150" cy="420" rx="200" ry="200" fill="url(#gGreen)"/><ellipse cx="40" cy="260" rx="110" ry="220" fill="url(#gGreen2)"/><ellipse cx="440" cy="250" rx="110" ry="90" fill="url(#gRed)"/><ellipse cx="570" cy="400" rx="60" ry="120" fill="url(#gSlate)"/><linearGradient id="hazeg" x1="0" y1="0" x2="1" y2="0"><stop offset="0" stop-color="#17a070"/><stop offset="0.22" stop-color="#1aa080"/><stop offset="0.32" stop-color="#2a7a9a"/><stop offset="0.42" stop-color="#2a40c0"/><stop offset="0.55" stop-color="#4a2ab8"/><stop offset="0.66" stop-color="#8a30b0"/><stop offset="0.75" stop-color="#2aa088"/><stop offset="0.88" stop-color="#2a8a9a"/><stop offset="1" stop-color="#2a4a7a"/></linearGradient><polygon points="40,450 300,20 578,430 578,450" fill="url(#hazeg)" opacity="0.55" filter="url(#b20)"/><polygon points="-30,450 70,450 305,10 230,10" fill="#0e7048" opacity="0.6" filter="url(#b20)"/><g mask="url(#fmask)"><rect x="0" y="420" width="578" height="153" fill="url(#floorg)"/><g filter="url(#b20)"><polygon points="51.6,440 79.6,440 164.6,573 121.6,573" fill="#1ed36a" opacity="0.45"/><polygon points="97.2,440 125.2,440 210.2,573 167.2,573" fill="#22d8b0" opacity="0.45"/><polygon points="142.8,440 170.8,440 255.8,573 212.8,573" fill="#4a6af0" opacity="0.45"/><polygon points="188.4,440 216.4,440 301.4,573 258.4,573" fill="#6a50f0" opacity="0.45"/><polygon points="234.0,440 262.0,440 347.0,573 304.0,573" fill="#9a4cf0" opacity="0.45"/><polygon points="279.6,440 307.6,440 392.6,573 349.6,573" fill="#c44ae8" opacity="0.45"/><polygon points="325.20000000000005,440 353.20000000000005,440 438.20000000000005,573 395.20000000000005,573" fill="#e24ad8" opacity="0.45"/><polygon points="370.8,440 398.8,440 483.8,573 440.8,573" fill="#2ad870" opacity="0.45"/><polygon points="416.40000000000003,440 444.40000000000003,440 529.4000000000001,573 486.40000000000003,573" fill="#2ad8b0" opacity="0.45"/><polygon points="462.00000000000006,440 490.00000000000006,440 575.0,573 532.0,573" fill="#44c8e8" opacity="0.45"/><polygon points="507.6,440 535.6,440 620.6,573 577.6,573" fill="#5a78ff" opacity="0.45"/><polygon points="553.2,440 581.2,440 666.2,573 623.2,573" fill="#9a5cff" opacity="0.45"/></g><g filter="url(#b10)"><polygon points="56.6,441 67.6,441 109.6,520 89.6,520" fill="#c8ffd8" opacity="0.35"/><polygon points="102.2,441 113.2,441 155.2,520 135.2,520" fill="#c8fff0" opacity="0.35"/><polygon points="147.8,441 158.8,441 200.8,520 180.8,520" fill="#e4ecff" opacity="0.35"/><polygon points="193.4,441 204.4,441 246.4,520 226.4,520" fill="#f0e4ff" opacity="0.35"/><polygon points="239.0,441 250.0,441 292.0,520 272.0,520" fill="#f4dcff" opacity="0.35"/><polygon points="284.6,441 295.6,441 337.6,520 317.6,520" fill="#f8d4fa" opacity="0.35"/><polygon points="330.20000000000005,441 341.20000000000005,441 383.20000000000005,520 363.20000000000005,520" fill="#fcdcf8" opacity="0.35"/><polygon points="375.8,441 386.8,441 428.8,520 408.8,520" fill="#c8ffd8" opacity="0.35"/><polygon points="421.40000000000003,441 432.40000000000003,441 474.40000000000003,520 454.40000000000003,520" fill="#c8fff0" opacity="0.35"/><polygon points="467.00000000000006,441 478.00000000000006,441 520.0,520 500.00000000000006,520" fill="#dcf8ff" opacity="0.35"/><polygon points="512.6,441 523.6,441 565.6,520 545.6,520" fill="#e4e8ff" opacity="0.35"/><polygon points="558.2,441 569.2,441 611.2,520 591.2,520" fill="#f0dcff" opacity="0.35"/></g></g><line x1="59.6" y1="440.4" x2="303.7" y2="11.4" stroke="#1ed36a" stroke-width="50" opacity="0.22" filter="url(#b20)"/><line x1="59.6" y1="440.4" x2="303.7" y2="11.4" stroke="#1ed36a" stroke-width="24" opacity="0.35" filter="url(#b10)"/><line x1="59.6" y1="440.4" x2="303.7" y2="11.4" stroke="#1ed36a" stroke-width="8" opacity="0.9" filter="url(#b4)"/><line x1="59.6" y1="440.4" x2="303.7" y2="11.4" stroke="#c8ffd8" stroke-width="4" stroke-linecap="round" filter="url(#b2)"/><line x1="59.6" y1="440.4" x2="303.7" y2="11.4" stroke="#c8ffd8" stroke-width="2.6" stroke-linecap="round"/><line x1="59.6" y1="442" x2="81.6" y2="478" stroke="#c8ffd8" stroke-width="9" opacity="0.3" filter="url(#b10)"/><circle cx="59.6" cy="440.4" r="7" fill="#c8ffd8" opacity="0.5" filter="url(#b4)"/><line x1="105.2" y1="440.4" x2="328.2" y2="48.5" stroke="#22d8b0" stroke-width="50" opacity="0.22" filter="url(#b20)"/><line x1="105.2" y1="440.4" x2="328.2" y2="48.5" stroke="#22d8b0" stroke-width="24" opacity="0.35" filter="url(#b10)"/><line x1="105.2" y1="440.4" x2="328.2" y2="48.5" stroke="#22d8b0" stroke-width="8" opacity="0.9" filter="url(#b4)"/><line x1="105.2" y1="440.4" x2="328.2" y2="48.5" stroke="#c8fff0" stroke-width="4" stroke-linecap="round" filter="url(#b2)"/><line x1="105.2" y1="440.4" x2="328.2" y2="48.5" stroke="#c8fff0" stroke-width="2.6" stroke-linecap="round"/><line x1="105.2" y1="442" x2="127.2" y2="478" stroke="#c8fff0" stroke-width="9" opacity="0.3" filter="url(#b10)"/><circle cx="105.2" cy="440.4" r="7" fill="#c8fff0" opacity="0.5" filter="url(#b4)"/><line x1="150.8" y1="440.4" x2="352.6" y2="85.7" stroke="#4a6af0" stroke-width="50" opacity="0.22" filter="url(#b20)"/><line x1="150.8" y1="440.4" x2="352.6" y2="85.7" stroke="#4a6af0" stroke-width="24" opacity="0.35" filter="url(#b10)"/><line x1="150.8" y1="440.4" x2="352.6" y2="85.7" stroke="#4a6af0" stroke-width="8" opacity="0.9" filter="url(#b4)"/><line x1="150.8" y1="440.4" x2="352.6" y2="85.7" stroke="#e4ecff" stroke-width="4" stroke-linecap="round" filter="url(#b2)"/><line x1="150.8" y1="440.4" x2="352.6" y2="85.7" stroke="#e4ecff" stroke-width="2.6" stroke-linecap="round"/><line x1="150.8" y1="442" x2="172.8" y2="478" stroke="#e4ecff" stroke-width="9" opacity="0.3" filter="url(#b10)"/><circle cx="150.8" cy="440.4" r="7" fill="#e4ecff" opacity="0.5" filter="url(#b4)"/><line x1="196.4" y1="440.4" x2="377.1" y2="122.8" stroke="#6a50f0" stroke-width="50" opacity="0.22" filter="url(#b20)"/><line x1="196.4" y1="440.4" x2="377.1" y2="122.8" stroke="#6a50f0" stroke-width="24" opacity="0.35" filter="url(#b10)"/><line x1="196.4" y1="440.4" x2="377.1" y2="122.8" stroke="#6a50f0" stroke-width="8" opacity="0.9" filter="url(#b4)"/><line x1="196.4" y1="440.4" x2="377.1" y2="122.8" stroke="#f0e4ff" stroke-width="4" stroke-linecap="round" filter="url(#b2)"/><line x1="196.4" y1="440.4" x2="377.1" y2="122.8" stroke="#f0e4ff" stroke-width="2.6" stroke-linecap="round"/><line x1="196.4" y1="442" x2="218.4" y2="478" stroke="#f0e4ff" stroke-width="9" opacity="0.3" filter="url(#b10)"/><circle cx="196.4" cy="440.4" r="7" fill="#f0e4ff" opacity="0.5" filter="url(#b4)"/><line x1="242.0" y1="440.4" x2="401.5" y2="160.0" stroke="#9a4cf0" stroke-width="50" opacity="0.22" filter="url(#b20)"/><line x1="242.0" y1="440.4" x2="401.5" y2="160.0" stroke="#9a4cf0" stroke-width="24" opacity="0.35" filter="url(#b10)"/><line x1="242.0" y1="440.4" x2="401.5" y2="160.0" stroke="#9a4cf0" stroke-width="8" opacity="0.9" filter="url(#b4)"/><line x1="242.0" y1="440.4" x2="401.5" y2="160.0" stroke="#f4dcff" stroke-width="4" stroke-linecap="round" filter="url(#b2)"/><line x1="242.0" y1="440.4" x2="401.5" y2="160.0" stroke="#f4dcff" stroke-width="2.6" stroke-linecap="round"/><line x1="242.0" y1="442" x2="264.0" y2="478" stroke="#f4dcff" stroke-width="9" opacity="0.3" filter="url(#b10)"/><circle cx="242.0" cy="440.4" r="7" fill="#f4dcff" opacity="0.5" filter="url(#b4)"/><line x1="287.6" y1="440.4" x2="426.0" y2="197.2" stroke="#c44ae8" stroke-width="50" opacity="0.22" filter="url(#b20)"/><line x1="287.6" y1="440.4" x2="426.0" y2="197.2" stroke="#c44ae8" stroke-width="24" opacity="0.35" filter="url(#b10)"/><line x1="287.6" y1="440.4" x2="426.0" y2="197.2" stroke="#c44ae8" stroke-width="8" opacity="0.9" filter="url(#b4)"/><line x1="287.6" y1="440.4" x2="426.0" y2="197.2" stroke="#f8d4fa" stroke-width="4" stroke-linecap="round" filter="url(#b2)"/><line x1="287.6" y1="440.4" x2="426.0" y2="197.2" stroke="#f8d4fa" stroke-width="2.6" stroke-linecap="round"/><line x1="287.6" y1="442" x2="309.6" y2="478" stroke="#f8d4fa" stroke-width="9" opacity="0.3" filter="url(#b10)"/><circle cx="287.6" cy="440.4" r="7" fill="#f8d4fa" opacity="0.5" filter="url(#b4)"/><line x1="333.2" y1="440.4" x2="450.5" y2="234.3" stroke="#e24ad8" stroke-width="50" opacity="0.22" filter="url(#b20)"/><line x1="333.2" y1="440.4" x2="450.5" y2="234.3" stroke="#e24ad8" stroke-width="24" opacity="0.35" filter="url(#b10)"/><line x1="333.2" y1="440.4" x2="450.5" y2="234.3" stroke="#e24ad8" stroke-width="8" opacity="0.9" filter="url(#b4)"/><line x1="333.2" y1="440.4" x2="450.5" y2="234.3" stroke="#fcdcf8" stroke-width="4" stroke-linecap="round" filter="url(#b2)"/><line x1="333.2" y1="440.4" x2="450.5" y2="234.3" stroke="#fcdcf8" stroke-width="2.6" stroke-linecap="round"/><line x1="333.2" y1="442" x2="355.2" y2="478" stroke="#fcdcf8" stroke-width="9" opacity="0.3" filter="url(#b10)"/><circle cx="333.2" cy="440.4" r="7" fill="#fcdcf8" opacity="0.5" filter="url(#b4)"/><line x1="378.8" y1="440.4" x2="474.9" y2="271.4" stroke="#2ad870" stroke-width="50" opacity="0.22" filter="url(#b20)"/><line x1="378.8" y1="440.4" x2="474.9" y2="271.4" stroke="#2ad870" stroke-width="24" opacity="0.35" filter="url(#b10)"/><line x1="378.8" y1="440.4" x2="474.9" y2="271.4" stroke="#2ad870" stroke-width="8" opacity="0.9" filter="url(#b4)"/><line x1="378.8" y1="440.4" x2="474.9" y2="271.4" stroke="#c8ffd8" stroke-width="4" stroke-linecap="round" filter="url(#b2)"/><line x1="378.8" y1="440.4" x2="474.9" y2="271.4" stroke="#c8ffd8" stroke-width="2.6" stroke-linecap="round"/><line x1="378.8" y1="442" x2="400.8" y2="478" stroke="#c8ffd8" stroke-width="9" opacity="0.3" filter="url(#b10)"/><circle cx="378.8" cy="440.4" r="7" fill="#c8ffd8" opacity="0.5" filter="url(#b4)"/><line x1="424.4" y1="440.4" x2="499.4" y2="308.6" stroke="#2ad8b0" stroke-width="50" opacity="0.22" filter="url(#b20)"/><line x1="424.4" y1="440.4" x2="499.4" y2="308.6" stroke="#2ad8b0" stroke-width="24" opacity="0.35" filter="url(#b10)"/><line x1="424.4" y1="440.4" x2="499.4" y2="308.6" stroke="#2ad8b0" stroke-width="8" opacity="0.9" filter="url(#b4)"/><line x1="424.4" y1="440.4" x2="499.4" y2="308.6" stroke="#c8fff0" stroke-width="4" stroke-linecap="round" filter="url(#b2)"/><line x1="424.4" y1="440.4" x2="499.4" y2="308.6" stroke="#c8fff0" stroke-width="2.6" stroke-linecap="round"/><line x1="424.4" y1="442" x2="446.4" y2="478" stroke="#c8fff0" stroke-width="9" opacity="0.3" filter="url(#b10)"/><circle cx="424.4" cy="440.4" r="7" fill="#c8fff0" opacity="0.5" filter="url(#b4)"/><line x1="470.0" y1="440.4" x2="523.9" y2="345.7" stroke="#44c8e8" stroke-width="50" opacity="0.22" filter="url(#b20)"/><line x1="470.0" y1="440.4" x2="523.9" y2="345.7" stroke="#44c8e8" stroke-width="24" opacity="0.35" filter="url(#b10)"/><line x1="470.0" y1="440.4" x2="523.9" y2="345.7" stroke="#44c8e8" stroke-width="8" opacity="0.9" filter="url(#b4)"/><line x1="470.0" y1="440.4" x2="523.9" y2="345.7" stroke="#dcf8ff" stroke-width="4" stroke-linecap="round" filter="url(#b2)"/><line x1="470.0" y1="440.4" x2="523.9" y2="345.7" stroke="#dcf8ff" stroke-width="2.6" stroke-linecap="round"/><line x1="470.0" y1="442" x2="492.0" y2="478" stroke="#dcf8ff" stroke-width="9" opacity="0.3" filter="url(#b10)"/><circle cx="470.0" cy="440.4" r="7" fill="#dcf8ff" opacity="0.5" filter="url(#b4)"/><line x1="515.6" y1="440.4" x2="548.3" y2="382.9" stroke="#5a78ff" stroke-width="50" opacity="0.22" filter="url(#b20)"/><line x1="515.6" y1="440.4" x2="548.3" y2="382.9" stroke="#5a78ff" stroke-width="24" opacity="0.35" filter="url(#b10)"/><line x1="515.6" y1="440.4" x2="548.3" y2="382.9" stroke="#5a78ff" stroke-width="8" opacity="0.9" filter="url(#b4)"/><line x1="515.6" y1="440.4" x2="548.3" y2="382.9" stroke="#e4e8ff" stroke-width="4" stroke-linecap="round" filter="url(#b2)"/><line x1="515.6" y1="440.4" x2="548.3" y2="382.9" stroke="#e4e8ff" stroke-width="2.6" stroke-linecap="round"/><line x1="515.6" y1="442" x2="537.6" y2="478" stroke="#e4e8ff" stroke-width="9" opacity="0.3" filter="url(#b10)"/><circle cx="515.6" cy="440.4" r="7" fill="#e4e8ff" opacity="0.5" filter="url(#b4)"/><line x1="561.2" y1="440.4" x2="572.8" y2="420.0" stroke="#9a5cff" stroke-width="50" opacity="0.22" filter="url(#b20)"/><line x1="561.2" y1="440.4" x2="572.8" y2="420.0" stroke="#9a5cff" stroke-width="24" opacity="0.35" filter="url(#b10)"/><line x1="561.2" y1="440.4" x2="572.8" y2="420.0" stroke="#9a5cff" stroke-width="8" opacity="0.9" filter="url(#b4)"/><line x1="561.2" y1="440.4" x2="572.8" y2="420.0" stroke="#f0dcff" stroke-width="4" stroke-linecap="round" filter="url(#b2)"/><line x1="561.2" y1="440.4" x2="572.8" y2="420.0" stroke="#f0dcff" stroke-width="2.6" stroke-linecap="round"/><line x1="561.2" y1="442" x2="583.2" y2="478" stroke="#f0dcff" stroke-width="9" opacity="0.3" filter="url(#b10)"/><circle cx="561.2" cy="440.4" r="7" fill="#f0dcff" opacity="0.5" filter="url(#b4)"/></symbol></svg>
<div class="a" style="left:8px;top:265px;width:238px;height:629px;background:#e6e6e6"></div>
<div class="a" style="left:245px;top:265px;width:1px;height:629px;background:#d4d4d4"></div>
<div class="a" style="left:228px;top:269px;width:15px;height:621px;background:#dedede"></div>
<div class="a" style="left:228px;top:269px;width:15px;height:14px;background:#fff"></div>
<svg class="a" style="left:231px;top:273px;" width="9" height="6" viewBox="0 0 9 6"><path d="M0.5 5 L4.5 1 L8.5 5 Z" fill="#606060"/></svg>
<div class="a" style="left:228px;top:283px;width:15px;height:267px;background:#fff;border:1px solid #c4c4c4"></div>
<div class="a" style="left:228px;top:877px;width:15px;height:14px;background:#fff"></div>
<svg class="a" style="left:231px;top:881px;" width="9" height="6" viewBox="0 0 9 6"><path d="M0.5 1 L4.5 5 L8.5 1 Z" fill="#606060"/></svg>
<div class="t" style="left:20.5px;top:284.00px;font-size:13px;color:#d3542f;font-weight:400;font-family:'Liberation Sans';">1</div>
<svg class="a" style="left:17px;top:300px;" width="11" height="10" viewBox="0 0 11 10"><path d="M5.5 0.3 L6.9 3.7 L10.6 3.9 L7.7 6.2 L8.7 9.8 L5.5 7.8 L2.3 9.8 L3.3 6.2 L0.4 3.9 L4.1 3.7 Z" fill="#6a6a6a"/></svg>
<div class="t" style="left:20.5px;top:398.00px;font-size:13px;color:#555;font-weight:400;font-family:'Liberation Sans';">2</div>
<svg class="a" style="left:17px;top:414px;" width="11" height="10" viewBox="0 0 11 10"><path d="M5.5 0.3 L6.9 3.7 L10.6 3.9 L7.7 6.2 L8.7 9.8 L5.5 7.8 L2.3 9.8 L3.3 6.2 L0.4 3.9 L4.1 3.7 Z" fill="#6a6a6a"/></svg>
<div class="t" style="left:20.5px;top:511.00px;font-size:13px;color:#555;font-weight:400;font-family:'Liberation Sans';">3</div>
<svg class="a" style="left:17px;top:527px;" width="11" height="10" viewBox="0 0 11 10"><path d="M5.5 0.3 L6.9 3.7 L10.6 3.9 L7.7 6.2 L8.7 9.8 L5.5 7.8 L2.3 9.8 L3.3 6.2 L0.4 3.9 L4.1 3.7 Z" fill="#6a6a6a"/></svg>
<div class="t" style="left:20.5px;top:625.00px;font-size:13px;color:#555;font-weight:400;font-family:'Liberation Sans';">4</div>
<svg class="a" style="left:17px;top:641px;" width="11" height="10" viewBox="0 0 11 10"><path d="M5.5 0.3 L6.9 3.7 L10.6 3.9 L7.7 6.2 L8.7 9.8 L5.5 7.8 L2.3 9.8 L3.3 6.2 L0.4 3.9 L4.1 3.7 Z" fill="#6a6a6a"/></svg>
<div class="t" style="left:20.5px;top:738.00px;font-size:13px;color:#555;font-weight:400;font-family:'Liberation Sans';">5</div>
<svg class="a" style="left:17px;top:754px;" width="11" height="10" viewBox="0 0 11 10"><path d="M5.5 0.3 L6.9 3.7 L10.6 3.9 L7.7 6.2 L8.7 9.8 L5.5 7.8 L2.3 9.8 L3.3 6.2 L0.4 3.9 L4.1 3.7 Z" fill="#6a6a6a"/></svg>
<div class="t" style="left:20.5px;top:852.00px;font-size:13px;color:#555;font-weight:400;font-family:'Liberation Sans';">6</div>
<svg class="a" style="left:17px;top:868px;" width="11" height="10" viewBox="0 0 11 10"><path d="M5.5 0.3 L6.9 3.7 L10.6 3.9 L7.7 6.2 L8.7 9.8 L5.5 7.8 L2.3 9.8 L3.3 6.2 L0.4 3.9 L4.1 3.7 Z" fill="#6a6a6a"/></svg>
<div class="a" style="left:40px;top:283px;width:170px;height:98px;background:#b7472a"></div>
<div class="a" style="left:43px;top:286px;width:164px;height:92px;background:#fff"></div>
<svg class="a" style="left:114px;top:286px;" width="93" height="92" viewBox="0 0 93 92"><use href="#neon"/></svg>
<div class="a" style="left:60px;top:298.5px;width:45px;height:1px;background:#b8b8b8"></div>
<div class="a" style="left:60px;top:302.3px;width:45px;height:1px;background:#b8b8b8"></div>
<div class="a" style="left:70px;top:305.8px;width:25px;height:1px;background:#b8b8b8"></div>
<div class="a" style="left:57px;top:313.8px;width:48px;height:1px;background:#c0c0c0"></div>
<div class="a" style="left:54px;top:325.5px;width:56px;height:2.2px;background:#505050"></div>
<div class="a" style="left:71px;top:331.3px;width:22px;height:2.2px;background:#505050"></div>
<div class="a" style="left:58px;top:342.6px;width:46px;height:1px;background:#c4c4c4"></div>
<div class="a" style="left:51px;top:350.8px;width:14px;height:1.3px;background:#4a70c8"></div>
<div class="a" style="left:53px;top:360.5px;width:57px;height:1.8px;background:#555"></div>
<div class="a" style="left:43px;top:399px;width:164px;height:92px;background:#fff;box-shadow:0 0 0 1px #d0d0d0"></div>
<svg class="a" style="left:43px;top:399px;" width="66" height="92" viewBox="0 0 66 92"><defs><linearGradient id="sky2" x1="0" y1="0" x2="0" y2="1"><stop offset="0" stop-color="#4e5898"/><stop offset="0.18" stop-color="#8a6a9a"/><stop offset="0.35" stop-color="#e08a80"/><stop offset="0.55" stop-color="#f0a078"/><stop offset="0.75" stop-color="#a06a70"/><stop offset="1" stop-color="#3a3a50"/></linearGradient><filter id="f2" filterUnits="userSpaceOnUse" x="-10" y="-10" width="90" height="110"><feGaussianBlur stdDeviation="1.3"/></filter><clipPath id="c2"><rect width="66" height="92"/></clipPath></defs><g clip-path="url(#c2)"><rect width="66" height="92" fill="url(#sky2)"/><g filter="url(#f2)"><path d="M0 8 Q30 14 60 24" stroke="#c0a8c8" stroke-width="3" fill="none" opacity=".6"/><ellipse cx="10" cy="46" rx="14" ry="3.5" fill="#6a5060" opacity=".8"/><path d="M0 70 L8 63 L28 48 L43 31 L52 40 L66 52 V92 H0Z" fill="#8a88a8"/><path d="M30 50 L43 31 L50 40 L46 52 L36 58Z" fill="#d0cede"/><path d="M0 76 Q20 70 40 74 Q55 70 66 74 V92 H0Z" fill="#6a6a88"/><path d="M6 80 Q26 76 40 82 Q50 78 66 80" stroke="#d8d8e8" stroke-width="2.5" fill="none" opacity=".7"/><path d="M0 86 H66 V92 H0Z" fill="#2e2e42"/></g></g></svg>
<div class="a" style="left:118.5px;top:413px;width:13px;height:1.2px;background:#8aa8e0"></div>
<div class="a" style="left:118px;top:426px;width:22px;height:2px;background:#303030"></div>
<div class="a" style="left:142px;top:426.3px;width:54px;height:1.5px;background:#a8a8a8"></div>
<div class="a" style="left:118px;top:432px;width:72px;height:1.5px;background:#a8a8a8"></div>
<div class="a" style="left:118px;top:438px;width:68px;height:1.5px;background:#a8a8a8"></div>
<div class="a" style="left:118px;top:444.3px;width:64px;height:1.5px;background:#a8a8a8"></div>
<div class="a" style="left:118px;top:450px;width:38px;height:1.5px;background:#a8a8a8"></div>
<svg class="a" style="left:170px;top:456px;" width="11" height="16" viewBox="0 0 11 16"><path d="M1 1 V12 L3.8 9.5 L6.2 14.5 L8.4 13.5 L6 8.6 H9.8 Z" fill="#fff" stroke="#222" stroke-width="1"/></svg>
<div class="a" style="left:43px;top:512px;width:164px;height:93px;background:#fff;box-shadow:0 0 0 1px #d0d0d0"></div>
<svg class="a" style="left:43px;top:512px;" width="93" height="93" viewBox="0 0 93 93"><use href="#neon"/></svg>
<div class="a" style="left:142px;top:532px;width:33px;height:2px;background:#8a8a8a"></div>
<div class="a" style="left:142px;top:544px;width:60px;height:1.6px;background:#8c8c8c"></div>
<div class="a" style="left:142px;top:549px;width:16px;height:1.6px;background:#8c8c8c"></div>
<div class="a" style="left:142px;top:554px;width:50px;height:1.6px;background:#8c8c8c"></div>
<div class="a" style="left:142px;top:559px;width:18px;height:1.6px;background:#8c8c8c"></div>
<div class="a" style="left:142px;top:570px;width:28px;height:1.6px;background:#8c8c8c"></div>
<div class="a" style="left:147px;top:575.5px;width:13px;height:1.2px;background:#8aa8e0"></div>
<div class="a" style="left:43px;top:625px;width:164px;height:93px;background:#060b16"></div>
<div class="a" style="left:43px;top:625px;width:164px;height:93px;background:radial-gradient(ellipse 60% 45% at 62% 90%,rgba(70,110,160,.45),rgba(0,0,0,0) 70%)"></div>
<div class="a" style="left:50px;top:641px;width:60px;height:64px;background:#e6ddd2"></div>
<svg class="a" style="left:52px;top:643px;" width="56" height="60" viewBox="0 0 56 60"><defs><linearGradient id="ph4" x1="0" y1="0" x2="1" y2="0"><stop offset="0" stop-color="#b08070"/><stop offset="0.6" stop-color="#8a5a48"/><stop offset="1" stop-color="#3a2820"/></linearGradient><filter id="f4" filterUnits="userSpaceOnUse" x="-10" y="-10" width="80" height="80"><feGaussianBlur stdDeviation="1.5"/></filter><clipPath id="c4"><rect width="56" height="60"/></clipPath></defs><g clip-path="url(#c4)"><rect width="56" height="60" fill="url(#ph4)"/><g filter="url(#f4)"><path d="M6 60 Q4 30 12 14 Q22 2 34 6 Q48 12 48 34 Q50 50 44 60Z" fill="#d6a878"/><ellipse cx="28" cy="30" rx="12" ry="16" fill="#e8b49a"/><path d="M0 60 Q8 44 28 46 Q48 44 56 60Z" fill="#a89aa0"/></g><rect x="22" y="50" width="26" height="9" fill="#2a2a3a"/><rect x="25" y="53" width="20" height="2.5" fill="#c8c8d0"/></g></svg>
<div class="a" style="left:118px;top:638px;width:12px;height:1px;background:#4a70c8"></div>
<div class="a" style="left:114px;top:645px;width:78px;height:1.3px;background:#d8dce8;opacity:.75"></div>
<div class="a" style="left:114px;top:650px;width:66px;height:1.3px;background:#d8dce8;opacity:.75"></div>
<div class="a" style="left:114px;top:655px;width:74px;height:1.3px;background:#d8dce8;opacity:.75"></div>
<div class="a" style="left:114px;top:659px;width:74px;height:1.3px;background:#d8dce8;opacity:.75"></div>
<div class="a" style="left:114px;top:664px;width:74px;height:1.3px;background:#d8dce8;opacity:.75"></div>
<div class="a" style="left:114px;top:668px;width:20px;height:1.3px;background:#d8dce8;opacity:.75"></div>
<div class="a" style="left:114px;top:676px;width:62px;height:1.6px;background:#f0f0f8;opacity:.85"></div>
<div class="a" style="left:114px;top:683px;width:84px;height:1.1px;background:#c8d0e0;opacity:.65"></div>
<div class="a" style="left:114px;top:687px;width:84px;height:1.1px;background:#c8d0e0;opacity:.65"></div>
<div class="a" style="left:114px;top:691px;width:78px;height:1.1px;background:#c8d0e0;opacity:.65"></div>
<div class="a" style="left:114px;top:695px;width:84px;height:1.1px;background:#c8d0e0;opacity:.65"></div>
<div class="a" style="left:114px;top:699px;width:50px;height:1.1px;background:#c8d0e0;opacity:.65"></div>
<div class="a" style="left:43px;top:738px;width:164px;height:93px;background:#fff;box-shadow:0 0 0 1px #d0d0d0"></div>
<svg class="a" style="left:142px;top:738px;" width="65" height="93" viewBox="0 0 65 93"><defs><linearGradient id="hp5" x1="0" y1="0" x2="0" y2="1"><stop offset="0" stop-color="#8a30c8"/><stop offset="0.22" stop-color="#9a48c0"/><stop offset="0.38" stop-color="#b0c848"/><stop offset="0.6" stop-color="#78b040"/><stop offset="1" stop-color="#4a8a38"/></linearGradient><filter id="f5" filterUnits="userSpaceOnUse" x="-10" y="-10" width="90" height="110"><feGaussianBlur stdDeviation="1.2"/></filter><clipPath id="c5"><rect width="65" height="93"/></clipPath></defs><g clip-path="url(#c5)"><rect width="65" height="93" fill="url(#hp5)"/><text x="32" y="11" font-size="10" text-anchor="middle" fill="#f0b030" font-weight="700" font-family="Liberation Serif">Гаррі Поттер</text><g filter="url(#f5)"><path d="M4 34 Q14 22 34 26 Q50 24 58 34 Q50 46 30 44 Q12 46 4 34Z" fill="#d84a28"/><ellipse cx="38" cy="28" rx="6" ry="6" fill="#5a3020"/><path d="M10 52 L58 40" stroke="#7a4a2a" stroke-width="3"/><path d="M48 30 Q58 50 56 70 H44 Q44 48 48 30Z" fill="#e8d8b8"/><ellipse cx="12" cy="62" rx="10" ry="14" fill="#d8e0d8" opacity=".7"/><ellipse cx="34" cy="78" rx="12" ry="10" fill="#6a4a8a" opacity=".8"/><ellipse cx="56" cy="82" rx="10" ry="10" fill="#4a3a6a" opacity=".8"/><ellipse cx="20" cy="86" rx="12" ry="8" fill="#5a9a30"/></g></g></svg>
<div class="a" style="left:54px;top:753px;width:13px;height:1.2px;background:#7a9ad8"></div>
<div class="a" style="left:54px;top:765px;width:80px;height:1.2px;background:#8a8a8a;opacity:.85"></div>
<div class="a" style="left:54px;top:772px;width:82px;height:1.2px;background:#8a8a8a;opacity:.85"></div>
<div class="a" style="left:54px;top:779px;width:80px;height:1.2px;background:#8a8a8a;opacity:.85"></div>
<div class="a" style="left:54px;top:786px;width:78px;height:1.2px;background:#8a8a8a;opacity:.85"></div>
<div class="a" style="left:54px;top:793px;width:74px;height:1.2px;background:#8a8a8a;opacity:.85"></div>
<div class="a" style="left:54px;top:800px;width:58px;height:1.2px;background:#8a8a8a;opacity:.85"></div>
<svg class="a" style="left:43px;top:853px;" width="164" height="41" viewBox="0 0 164 41"><defs><linearGradient id="g6" x1="0" y1="0" x2="1" y2="0"><stop offset="0" stop-color="#3a2e1c"/><stop offset="0.45" stop-color="#4a3a22"/><stop offset="0.75" stop-color="#2e2416"/><stop offset="1" stop-color="#14100a"/></linearGradient><filter id="f6" filterUnits="userSpaceOnUse" x="-10" y="-10" width="190" height="70"><feGaussianBlur stdDeviation="1.5"/></filter><clipPath id="c6"><rect width="164" height="41"/></clipPath></defs><g clip-path="url(#c6)"><rect width="164" height="41" fill="url(#g6)"/><g filter="url(#f6)"><path d="M0 0 H22 V41 H0Z" fill="#5a4a30" opacity=".5"/><ellipse cx="100" cy="40" rx="34" ry="24" fill="#9a9088" opacity=".75"/><path d="M72 14 Q80 -2 100 0 Q122 -2 128 16 Q100 10 72 14Z" fill="#5a5034"/><ellipse cx="100" cy="28" rx="16" ry="14" fill="#b89880"/></g><rect x="6" y="19" width="66" height="1.8" fill="#f4ecdc"/><rect x="6" y="25" width="26" height="1.8" fill="#f4ecdc"/><rect x="6" y="38" width="72" height="1.8" fill="#e8dcc8" opacity=".8"/></g></svg>
<div class="a" style="left:246px;top:265px;width:1273px;height:593px;background:#e6e6e6"></div>
<div class="a" style="left:367px;top:275px;width:1017px;height:573px;background:#fff;box-shadow:0 0 0 1px #d2d2d2"></div>
<svg class="a" style="left:806px;top:275px;" width="578" height="573" viewBox="0 0 578 573"><use href="#neon"/></svg>
<div class="t" style="left:306.29999999999995px;width:600px;text-align:center;top:344.85px;font-size:21.2px;color:#000;font-weight:400;font-family:'Liberation Serif';">Державний навчальний заклад</div>
<div class="t" style="left:307px;width:600px;text-align:center;top:367.75px;font-size:21.2px;color:#000;font-weight:400;font-family:'Liberation Serif';">"Бердянський центр професійно-</div>
<div class="t" style="left:306.29999999999995px;width:600px;text-align:center;top:389.75px;font-size:21.2px;color:#000;font-weight:400;font-family:'Liberation Serif';">технічної освіти"</div>
<div class="t" style="left:306.29999999999995px;width:600px;text-align:center;top:436.25px;font-size:21.2px;color:#000;font-weight:400;font-family:'Liberation Serif';">конкурс «Літературний меридіан»</div>
<div class="t" style="left:307px;width:600px;text-align:center;top:505.39px;font-size:29.5px;color:#000;font-weight:700;font-family:'Liberation Serif';">«Таємниця забороненого</div>
<div class="t" style="left:307.6px;width:600px;text-align:center;top:536.69px;font-size:29.5px;color:#000;font-weight:700;font-family:'Liberation Serif';">коридору»</div>
<div class="t" style="left:304.4px;width:600px;text-align:center;top:615.04px;font-size:21.2px;color:#000;font-weight:400;font-family:'Liberation Serif';">Оглухова Олена Олександрівна</div>
<div class="a" style="left:416px;top:679px;width:82px;height:7px;background:#2a72de"></div>
<div class="t" style="left:306.5px;width:600px;text-align:center;top:725.63px;font-size:21.1px;color:#000;font-weight:700;font-family:'Liberation Serif';">Категорія: «Художники-ілюстратори»</div>
<div class="a" style="left:1503px;top:269px;width:15px;height:540px;background:#dedede"></div>
<div class="a" style="left:1503px;top:269px;width:15px;height:14px;background:#fff"></div>
<svg class="a" style="left:1506px;top:273px;" width="9" height="6" viewBox="0 0 9 6"><path d="M0.5 5 L4.5 1 L8.5 5 Z" fill="#606060"/></svg>
<div class="a" style="left:1503px;top:283px;width:15px;height:43px;background:#fff;border:1px solid #c4c4c4"></div>
<div class="a" style="left:1503px;top:791px;width:15px;height:13px;background:#fff"></div>
<svg class="a" style="left:1506px;top:795px;" width="9" height="6" viewBox="0 0 9 6"><path d="M0.5 1 L4.5 5 L8.5 1 Z" fill="#606060"/></svg>
<div class="a" style="left:1503px;top:809px;width:15px;height:85px;background:#e6e6e6"></div>
<svg class="a" style="left:1506px;top:809px;" width="9" height="9" viewBox="0 0 9 9"><path d="M0.5 0.8 H8.5" stroke="#606060" stroke-width="1"/><path d="M0.5 5 L4.5 1.5 L8.5 5 Z M0.5 9 L4.5 5.5 L8.5 9 Z" fill="#606060"/></svg>
<svg class="a" style="left:1506px;top:826px;" width="9" height="9" viewBox="0 0 9 9"><path d="M0.5 8.2 H8.5" stroke="#606060" stroke-width="1"/><path d="M0.5 0 L4.5 3.5 L8.5 0 Z M0.5 4 L4.5 7.5 L8.5 4 Z" fill="#606060"/></svg>
<div class="a" style="left:246px;top:858px;width:1273px;height:36px;background:#e6e6e6;border-top:1px solid #c8c8c8"></div>
<div class="t" style="left:258px;top:867.55px;font-size:14px;color:#5a5a5a;font-weight:400;font-family:'Liberation Sans';">Нотатки до слайда</div>
<div class="a" style="left:8px;top:895px;width:1511px;height:20px;background:#f3f3f3"></div>
<div class="t" style="left:16.5px;top:899.61px;font-size:10.5px;color:#5a5a5a;font-weight:400;font-family:'Liberation Sans';letter-spacing:-0.45px;">Слайд 1 з 12</div>
<svg class="a" style="left:94px;top:898px;" width="14" height="12" viewBox="0 0 14 12"><path d="M0.5 1 H5.5 V11 H0.5 Z" fill="none" stroke="#5a5a5a" stroke-width="0.9"/><path d="M6.5 1 H12.5 V11 H6.5" fill="none" stroke="#5a5a5a" stroke-width="0.9"/><path d="M7.5 5.5 L9 7.5 L13.5 0.5" fill="none" stroke="#5a5a5a" stroke-width="1"/></svg>
<div class="t" style="left:124px;top:899.61px;font-size:10.5px;color:#444;font-weight:400;font-family:'Liberation Sans';letter-spacing:-0.2px;">українська</div>
<svg class="a" style="left:1019px;top:898px;" width="11" height="12" viewBox="0 0 11 12"><path d="M5.5 0.5 L8.5 3.5 H2.5 Z" fill="#5a5a5a"/><path d="M0 5.5 H11 M0 8 H11 M0 10.5 H11" stroke="#5a5a5a" stroke-width="1"/></svg>
<div class="t" style="left:1034.7px;top:899.81px;font-size:10.5px;color:#444;font-weight:400;font-family:'Liberation Sans';letter-spacing:-0.35px;">Нотатки</div>
<svg class="a" style="left:1091px;top:899px;" width="14" height="13" viewBox="0 0 14 13"><path d="M1 0.5 H13 Q13.5 0.5 13.5 1 V8 Q13.5 8.5 13 8.5 H5 L2.5 12 V8.5 H1 Q0.5 8.5 0.5 8 V1 Q0.5 0.5 1 0.5Z" fill="#606060"/></svg>
<div class="t" style="left:1107.5px;top:900.11px;font-size:10.5px;color:#444;font-weight:400;font-family:'Liberation Sans';letter-spacing:-0.35px;">Примітки</div>
<div class="a" style="left:1169px;top:895px;width:39px;height:20px;background:#c6c6c6"></div>
<svg class="a" style="left:1181px;top:898px;" width="14" height="12" viewBox="0 0 14 12"><rect x="0.5" y="0.5" width="13" height="11" fill="none" stroke="#666" stroke-width="1"/><path d="M3 0.5 V11.5" stroke="#666" stroke-width="1"/><rect x="5.5" y="3" width="5" height="3.5" fill="none" stroke="#666" stroke-width="0.9"/></svg>
<svg class="a" style="left:1221px;top:898px;" width="13" height="12" viewBox="0 0 13 12"><rect x="0.5" y="0.5" width="4.5" height="4" fill="none" stroke="#777" stroke-width="0.9"/><rect x="8" y="0.5" width="4.5" height="4" fill="none" stroke="#777" stroke-width="0.9"/><rect x="0.5" y="7.5" width="4.5" height="4" fill="none" stroke="#777" stroke-width="0.9"/><rect x="8" y="7.5" width="4.5" height="4" fill="none" stroke="#777" stroke-width="0.9"/></svg>
<svg class="a" style="left:1260px;top:898px;" width="14" height="12" viewBox="0 0 14 12"><path d="M0.5 0.5 H6.5 V11.5 H0.5Z M7.5 0.5 H13.5 V11.5 H7.5Z" fill="none" stroke="#777" stroke-width="0.9"/><path d="M2 3 H5 M2 5.5 H5 M2 8 H5 M9 3 H12 M9 5.5 H12 M9 8 H12" stroke="#777" stroke-width="0.8"/></svg>
<svg class="a" style="left:1299px;top:898px;" width="15" height="13" viewBox="0 0 15 13"><path d="M0.5 0.8 H14.5" stroke="#777" stroke-width="1.1"/><path d="M2 1 V8 H13 V1" fill="none" stroke="#777" stroke-width="0.9"/><path d="M7.5 8 V12.5 M5 12.5 H10" stroke="#777" stroke-width="0.9"/><path d="M4 4 H11" stroke="#aaa" stroke-width="0.8"/></svg>
<div class="a" style="left:1332px;top:904px;width:8px;height:1.2px;background:#555"></div>
<div class="a" style="left:1344px;top:905px;width:98px;height:1px;background:#b8b8b8"></div>
<div class="a" style="left:1393px;top:900px;width:1px;height:10px;background:#999"></div>
<div class="a" style="left:1381px;top:899px;width:5px;height:11px;background:#6a6a6a"></div>
<svg class="a" style="left:1447px;top:901px;" width="9" height="9" viewBox="0 0 9 9"><path d="M0 4.5 H9 M4.5 0 V9" stroke="#555" stroke-width="1.1"/></svg>
<div class="t" style="left:1468px;top:900.11px;font-size:10.5px;color:#555;font-weight:400;font-family:'Liberation Sans';letter-spacing:-0.2px;">81%</div>
<svg class="a" style="left:1502px;top:899px;" width="11" height="11" viewBox="0 0 11 11"><rect x="0.5" y="0.5" width="10" height="10" fill="none" stroke="#777" stroke-width="0.9"/><path d="M2 2 L4.5 4.5 M2 2 V4 M2 2 H4 M9 9 L6.5 6.5 M9 9 V7 M9 9 H7" stroke="#555" stroke-width="0.9"/></svg>
<div class="a" style="left:0px;top:1029px;width:1920px;height:1px;background:#f0e4e8;opacity:.9"></div>
<div class="a" style="left:0px;top:1030px;width:1920px;height:50px;background:linear-gradient(90deg,#1f2e38 0px,#1d2b34 900px,#1c2830 1290px,#141b1f 1315px,#161e22 1345px,#1c2a32 1380px,#1e2c35 1480px,#141a1d 1510px,#12171a 1530px,#1c2a33 1560px,#1f2e37 1920px)"></div>
<svg class="a" style="left:20px;top:1044px;" width="21" height="21" viewBox="0 0 21 21"><path d="M0 3 L8.5 1.8 V9.8 H0 Z M9.7 1.6 L21 0 V9.8 H9.7 Z M0 11 H8.5 V19 L0 17.8 Z M9.7 11 H21 V20.8 L9.7 19.2 Z" fill="#fff"/></svg>
<div class="a" style="left:60px;top:1030px;width:360px;height:50px;background:#f0f0f0"></div>
<svg class="a" style="left:75px;top:1045px;" width="21" height="20" viewBox="0 0 21 20"><circle cx="12.5" cy="7.5" r="6.3" fill="none" stroke="#1a1a1a" stroke-width="1.6"/><path d="M8 12 L1 19" stroke="#1a1a1a" stroke-width="1.6"/></svg>
<div class="t" style="left:111px;top:1046.26px;font-size:18px;color:#1e1e1e;font-weight:400;font-family:'Liberation Sans';letter-spacing:0.15px;">Пошук</div>
<svg class="a" style="left:322px;top:1030px;" width="96" height="50" viewBox="0 0 96 50"><defs><filter id="sb" filterUnits="userSpaceOnUse" x="-20" y="-20" width="140" height="90"><feGaussianBlur stdDeviation="2.5"/></filter><clipPath id="ec"><rect width="98" height="50"/></clipPath></defs><g clip-path="url(#ec)"><g filter="url(#sb)"><ellipse cx="52" cy="18" rx="36" ry="14" fill="#cfe4ea"/><ellipse cx="30" cy="30" rx="24" ry="18" fill="#f6e6bc"/><ellipse cx="82" cy="26" rx="12" ry="16" fill="#c6dcea"/></g><path d="M0 52 Q6 42 26 43 Q40 41 52 43 Q70 40 84 44 Q94 46 98 52 Z" fill="#6c7078"/><path d="M27 43 Q22 28 16 8" fill="none" stroke="#2a6a3a" stroke-width="1.4"/><ellipse cx="16" cy="12" rx="2.5" ry="6" fill="#5a8a6a" transform="rotate(-15 16 12)"/><ellipse cx="23" cy="18" rx="2.2" ry="5" fill="#8aa890" transform="rotate(10 23 18)"/><ellipse cx="14" cy="24" rx="2.2" ry="5" fill="#6a9a7a" transform="rotate(-50 14 24)"/><ellipse cx="26" cy="28" rx="2" ry="5" fill="#5a8a6a" transform="rotate(20 26 28)"/><ellipse cx="18" cy="36" rx="2" ry="5" fill="#6a9a7a" transform="rotate(-55 18 36)"/><path d="M52 38 L50 44 M60 40 V45 M76 40 V45" stroke="#8a4a20" stroke-width="2"/><ellipse cx="62" cy="27" rx="23" ry="15" fill="#dc8a26"/><path d="M44 26 Q36 32 29 37 Q40 37 48 34 Z" fill="#c87a24"/><path d="M33 35 L29 37.5" stroke="#3a2a1a" stroke-width="2" stroke-linecap="round"/><circle cx="42" cy="31" r="0.9" fill="#5a2a10"/><path d="M49.8 20.9 L55.8 17.9" stroke="#b86018" stroke-width="1.6" stroke-linecap="round"/><path d="M72.2 27.0 L78.2 24.0" stroke="#f4b048" stroke-width="1.6" stroke-linecap="round"/><path d="M67.5 16.5 L73.5 13.5" stroke="#d88a28" stroke-width="1.6" stroke-linecap="round"/><path d="M53.2 23.0 L59.2 20.0" stroke="#d88a28" stroke-width="1.6" stroke-linecap="round"/><path d="M62.5 18.9 L68.5 15.9" stroke="#d88a28" stroke-width="1.6" stroke-linecap="round"/><path d="M63.6 23.4 L69.6 20.4" stroke="#f0a838" stroke-width="1.6" stroke-linecap="round"/><path d="M72.4 25.6 L78.4 22.6" stroke="#f4b048" stroke-width="1.6" stroke-linecap="round"/><path d="M63.6 24.4 L69.6 21.4" stroke="#f4b048" stroke-width="1.6" stroke-linecap="round"/><path d="M55.7 24.3 L61.7 21.3" stroke="#b86018" stroke-width="1.6" stroke-linecap="round"/><path d="M59.6 17.0 L65.6 14.0" stroke="#d88a28" stroke-width="1.6" stroke-linecap="round"/><path d="M73.0 19.0 L79.0 16.0" stroke="#d88a28" stroke-width="1.6" stroke-linecap="round"/><path d="M69.9 21.7 L75.9 18.7" stroke="#f0a838" stroke-width="1.6" stroke-linecap="round"/><path d="M66.7 27.0 L72.7 24.0" stroke="#f0a838" stroke-width="1.6" stroke-linecap="round"/><path d="M60.1 21.5 L66.1 18.5" stroke="#d88a28" stroke-width="1.6" stroke-linecap="round"/><path d="M74.7 21.4 L80.7 18.4" stroke="#d88a28" stroke-width="1.6" stroke-linecap="round"/><path d="M60.7 20.3 L66.7 17.3" stroke="#b86018" stroke-width="1.6" stroke-linecap="round"/><path d="M61.8 20.2 L67.8 17.2" stroke="#f0a838" stroke-width="1.6" stroke-linecap="round"/><path d="M75.0 26.3 L81.0 23.3" stroke="#f4b048" stroke-width="1.6" stroke-linecap="round"/><path d="M78.5 23.7 L84.5 20.7" stroke="#f0a838" stroke-width="1.6" stroke-linecap="round"/><path d="M66.6 22.8 L72.6 19.8" stroke="#f4b048" stroke-width="1.6" stroke-linecap="round"/><path d="M65.8 23.9 L71.8 20.9" stroke="#b86018" stroke-width="1.6" stroke-linecap="round"/><path d="M55.1 24.1 L61.1 21.1" stroke="#d88a28" stroke-width="1.6" stroke-linecap="round"/><path d="M42.5 23.5 L48.5 20.5" stroke="#d88a28" stroke-width="1.6" stroke-linecap="round"/><path d="M65.7 27.5 L71.7 24.5" stroke="#d88a28" stroke-width="1.6" stroke-linecap="round"/><path d="M74.6 21.0 L80.6 18.0" stroke="#f4b048" stroke-width="1.6" stroke-linecap="round"/><path d="M66.5 17.7 L72.5 14.7" stroke="#d88a28" stroke-width="1.6" stroke-linecap="round"/><path d="M67.1 23.1 L73.1 20.1" stroke="#b86018" stroke-width="1.6" stroke-linecap="round"/><path d="M61.9 14.4 L67.9 11.4" stroke="#b86018" stroke-width="1.6" stroke-linecap="round"/><path d="M51.0 27.6 L57.0 24.6" stroke="#f4b048" stroke-width="1.6" stroke-linecap="round"/><path d="M79.5 27.7 L85.5 24.7" stroke="#b86018" stroke-width="1.6" stroke-linecap="round"/><path d="M62.9 23.1 L68.9 20.1" stroke="#f4b048" stroke-width="1.6" stroke-linecap="round"/><path d="M70.5 28.8 L76.5 25.8" stroke="#b86018" stroke-width="1.6" stroke-linecap="round"/><path d="M78.4 28.1 L84.4 25.1" stroke="#d88a28" stroke-width="1.6" stroke-linecap="round"/><path d="M54.1 16.0 L60.1 13.0" stroke="#d88a28" stroke-width="1.6" stroke-linecap="round"/><path d="M67.1 19.8 L73.1 16.8" stroke="#f4b048" stroke-width="1.6" stroke-linecap="round"/><path d="M68.5 16.5 L74.5 13.5" stroke="#b86018" stroke-width="1.6" stroke-linecap="round"/><path d="M57.4 17.0 L63.4 14.0" stroke="#f0a838" stroke-width="1.6" stroke-linecap="round"/><path d="M71.8 27.7 L77.8 24.7" stroke="#b86018" stroke-width="1.6" stroke-linecap="round"/><path d="M61.7 18.8 L67.7 15.8" stroke="#f4b048" stroke-width="1.6" stroke-linecap="round"/><path d="M76.6 21.0 L82.6 18.0" stroke="#b86018" stroke-width="1.6" stroke-linecap="round"/></g></svg>
<svg class="a" style="left:440px;top:1045px;" width="21" height="20" viewBox="0 0 21 20"><path d="M0.5 0.5 H12.5 M0.5 19.5 H12.5 M2 3.5 H11 V16.5 H2 Z" fill="none" stroke="#fff" stroke-width="1.1"/><path d="M17.5 0 V19.5" stroke="#fff" stroke-width="1.1"/><rect x="16" y="7" width="3" height="3" fill="#fff"/></svg>
<svg class="a" style="left:499px;top:1040px;" width="31" height="31" viewBox="0 0 31 31"><defs><linearGradient id="eg1" x1="0" y1="0" x2="1" y2="1"><stop offset="0" stop-color="#3bd5a0"/><stop offset="0.5" stop-color="#2aa8e0"/><stop offset="1" stop-color="#1060c0"/></linearGradient></defs><circle cx="15.5" cy="15.5" r="15" fill="url(#eg1)"/><path d="M4 20 Q6 8 16 8 Q26 8 28 16 Q24 12 18 13 Q12 14 13 19 Q14 24 22 25 Q14 30 8 26 Q4 24 4 20Z" fill="#1a5fb0"/><path d="M14 19 Q14 14 20 14 Q26 15 28 18 Q26 20 20 20 Z" fill="#1c2a32"/></svg>
<div class="a" style="left:561px;top:1040px;width:30px;height:30px;background:#1a74d2"></div>
<svg class="a" style="left:561px;top:1040px;" width="30" height="30" viewBox="0 0 30 30"><circle cx="15" cy="15" r="11" fill="#fff"/><path d="M6 15 L11 10.5 V13.5 H19 V10.5 L24 15 L19 19.5 V16.5 H11 V19.5Z" fill="#1a74d2"/></svg>
<div class="a" style="left:608px;top:1030px;width:61px;height:47px;background:#4a5054"></div>
<div class="a" style="left:608px;top:1077px;width:61px;height:3px;background:#8fbce6"></div>
<svg class="a" style="left:623px;top:1040px;" width="31" height="31" viewBox="0 0 31 31"><circle cx="15.5" cy="15.5" r="15" fill="#1a6cf0"/><text x="15.5" y="18.5" font-size="8.5" text-anchor="middle" fill="#fff" font-weight="700" font-family="Liberation Sans">zoom</text></svg>
<svg class="a" style="left:685px;top:1040px;" width="31" height="31" viewBox="0 0 31 31"><circle cx="15" cy="15" r="14.5" fill="#2da44e"/><path d="M15 15 L2.4 7.7 A14.5 14.5 0 0 1 27.6 7.7 Z" fill="#e33b2e"/><path d="M15 15 L27.6 7.7 A14.5 14.5 0 0 1 15 29.5 Z" fill="#f7c21a"/><circle cx="15" cy="15" r="6.5" fill="#fff"/><circle cx="15" cy="15" r="5" fill="#1a73e8"/></svg>
<svg class="a" style="left:700px;top:1055px;" width="18" height="18" viewBox="0 0 18 18"><circle cx="9" cy="9" r="8.5" fill="#5aa03a" stroke="#3a7a2a" stroke-width="1"/><text x="9" y="13" font-size="10" text-anchor="middle" fill="#e8f0d8" font-weight="700" font-family="Liberation Sans">H</text></svg>
<div class="a" style="left:675px;top:1077px;width:51px;height:3px;background:#8fbce6"></div>
<svg class="a" style="left:747px;top:1042px;" width="30" height="25" viewBox="0 0 30 25"><path d="M0 3 Q0 1 2 1 H10 L13 4 H28 Q30 4 30 6 V23 Q30 25 28 25 H2 Q0 25 0 23 Z" fill="#e8a820"/><path d="M0 8 H30 V23 Q30 25 28 25 H2 Q0 25 0 23Z" fill="#f8d060"/><path d="M8 14 H22 V25 H18 V18 H12 V25 H8Z" fill="#2a8ad8"/></svg>
<div class="a" style="left:737px;top:1077px;width:46px;height:3px;background:#8fbce6"></div>
<div class="a" style="left:810px;top:1040px;width:28px;height:28px;background:#c8161d;border-radius:3px"></div>
<svg class="a" style="left:810px;top:1040px;" width="28" height="28" viewBox="0 0 28 28"><path d="M7 21 Q10 14 13 7 Q14 4 15 7 Q16 12 21 17 Q24 19 21 19 Q14 18 7 21 Z M10 20 L20 17" fill="none" stroke="#fff" stroke-width="1.8" stroke-linejoin="round"/></svg>
<div class="a" style="left:799px;top:1077px;width:51px;height:3px;background:#8fbce6"></div>
<svg class="a" style="left:871px;top:1040px;" width="31" height="31" viewBox="0 0 31 31"><circle cx="15" cy="15" r="14.5" fill="#2da44e"/><path d="M15 15 L2.4 7.7 A14.5 14.5 0 0 1 27.6 7.7 Z" fill="#e33b2e"/><path d="M15 15 L27.6 7.7 A14.5 14.5 0 0 1 15 29.5 Z" fill="#f7c21a"/><circle cx="15" cy="15" r="6.5" fill="#fff"/><circle cx="15" cy="15" r="5" fill="#1a73e8"/></svg>
<svg class="a" style="left:885px;top:1055px;" width="18" height="18" viewBox="0 0 18 18"><circle cx="9" cy="9" r="8.5" fill="#6a5a5a"/><circle cx="9" cy="7" r="4" fill="#e0c8c0"/><path d="M2 16 Q9 10 16 16" fill="#d8d0d0"/></svg>
<div class="a" style="left:861px;top:1077px;width:51px;height:3px;background:#8fbce6"></div>
<svg class="a" style="left:933px;top:1040px;" width="30" height="31" viewBox="0 0 30 31"><path d="M15 1 Q29 1 29 14 Q29 26 15 26 L10 30 V25.5 Q1 23 1 14 Q1 1 15 1Z" fill="#fff" stroke="#7d58d8" stroke-width="2.2"/><path d="M10 8 Q8 9 9 12 Q12 18 18 21 Q21 22 22 19 L19.5 17 L17.5 18.5 Q14 16.5 12.5 13 L14 11 L12 8Z" fill="#7d58d8"/><path d="M16 7 Q22 7.5 22.5 13 M16 9.5 Q19.5 10 20 13" fill="none" stroke="#7d58d8" stroke-width="1.1"/></svg>
<div class="a" style="left:923px;top:1077px;width:50px;height:3px;background:#8fbce6"></div>
<svg class="a" style="left:1550px;top:1050px;" width="17" height="10" viewBox="0 0 17 10"><path d="M0.8 9 L8.5 1.3 L16.2 9" fill="none" stroke="#fff" stroke-width="1.2"/></svg>
<svg class="a" style="left:1577px;top:1048px;" width="22" height="14" viewBox="0 0 22 14"><path d="M5 13.5 Q0 13.5 0.5 9 Q1 5.5 5 5.8 Q6.5 0.5 12 0.8 Q17 1 18 6 Q21.5 6.5 21.5 10 Q21.5 13.5 17.5 13.5Z" fill="#e8e8e8"/></svg>
<svg class="a" style="left:1610px;top:1045px;" width="15" height="21" viewBox="0 0 15 21"><rect x="4" y="0.5" width="7" height="12" rx="3.5" fill="#fff"/><path d="M1 9 Q1 15 7.5 15 Q14 15 14 9 M7.5 15 V19.5 M4 19.8 H11" fill="none" stroke="#fff" stroke-width="1.1"/></svg>
<svg class="a" style="left:1637px;top:1049px;" width="22" height="13" viewBox="0 0 22 13"><rect x="6.5" y="2.5" width="12.5" height="8.5" fill="none" stroke="#fff" stroke-width="1.1"/><rect x="8" y="4" width="9.5" height="5.5" fill="#fff"/><rect x="19" y="5" width="1.8" height="3.5" fill="#fff"/><path d="M0.5 6.5 H6.5 M2 2 V5 M4.5 2 V5" stroke="#fff" stroke-width="1.1"/></svg>
<svg class="a" style="left:1668px;top:1046px;" width="21" height="18" viewBox="0 0 21 18"><path d="M0.5 5.5 H4 L9 1 V17 L4 12.5 H0.5 Z" fill="none" stroke="#fff" stroke-width="1.1"/><path d="M12 6.5 Q13.5 9 12 11.5 M14.8 4 Q17.8 9 14.8 14 M17.5 1.5 Q22 9 17.5 16.5" fill="none" stroke="#fff" stroke-width="1.1"/></svg>
<svg class="a" style="left:1697px;top:1047px;" width="21" height="17" viewBox="0 0 21 17"><rect x="5.5" y="1.5" width="15" height="11" fill="none" stroke="#fff" stroke-width="1.1"/><path d="M13 12.5 V15.5 M9.5 16 H16.5" stroke="#fff" stroke-width="1.1"/><rect x="0.5" y="1" width="3.5" height="4" fill="none" stroke="#fff" stroke-width="1"/><path d="M2.2 5 V14" stroke="#fff" stroke-width="1"/></svg>
<div class="t" style="left:1732px;top:1037.55px;font-size:14px;color:#fff;font-weight:400;font-family:'Liberation Sans';letter-spacing:-0.1px;">УКР</div>
<div class="t" style="left:1732px;top:1059.45px;font-size:14px;color:#fff;font-weight:400;font-family:'Liberation Sans';letter-spacing:-0.8px;">UKR</div>
<div class="t" style="left:1794px;top:1037.55px;font-size:14px;color:#fff;font-weight:400;font-family:'Liberation Sans';letter-spacing:-0.2px;">12:03</div>
<div class="t" style="left:1777px;top:1059.45px;font-size:14px;color:#fff;font-weight:400;font-family:'Liberation Sans';letter-spacing:-0.1px;">19.03.2026</div>
<svg class="a" style="left:1869px;top:1045px;" width="21" height="20" viewBox="0 0 21 20"><path d="M0.6 0.6 H20.4 V15 H13 L10.5 18.5 L8 15 H0.6 Z" fill="none" stroke="#fff" stroke-width="1.1"/></svg>
<div class="a" style="left:1913px;top:1030px;width:1px;height:50px;background:#5a646a"></div>
<svg class="a" style="left:1663px;top:406px;" width="121" height="215" viewBox="0 0 121 215"><defs><linearGradient id="wall" x1="0" y1="0" x2="1" y2="1"><stop offset="0" stop-color="#8cc094"/><stop offset="0.5" stop-color="#80b888"/><stop offset="1" stop-color="#6ea878"/></linearGradient><linearGradient id="ceil" x1="0" y1="0" x2="1" y2="1"><stop offset="0" stop-color="#d0d2cc"/><stop offset="1" stop-color="#b8bab4"/></linearGradient><filter id="vb" filterUnits="userSpaceOnUse" x="-20" y="-20" width="160" height="260"><feGaussianBlur stdDeviation="2.5"/></filter><filter id="vb1" filterUnits="userSpaceOnUse" x="-20" y="-20" width="160" height="260"><feGaussianBlur stdDeviation="1.2"/></filter><clipPath id="vc"><rect width="121" height="215"/></clipPath></defs><g clip-path="url(#vc)"><rect width="121" height="215" fill="url(#wall)"/><path d="M18 0 H121 V92 Z" fill="url(#ceil)"/><path d="M15 0 L121 88 V97 L6 0Z" fill="#eceae6"/><g filter="url(#vb)"><path d="M6 170 Q4 140 14 110 Q22 70 56 66 Q92 68 98 112 Q104 140 100 178 Q80 190 60 186 Q30 186 6 170 Z" fill="#3a241c"/><path d="M8 165 Q10 140 22 130 L30 175 Z" fill="#6a3a28"/></g><g filter="url(#vb1)"><path d="M30 100 Q34 80 56 78 Q78 80 82 104 Q84 130 80 148 Q70 168 56 168 Q40 168 32 150 Q26 128 30 100Z" fill="#e6c2b4"/><path d="M28 104 Q34 80 56 76 Q80 78 86 108 Q76 96 58 92 Q40 94 28 104Z" fill="#3e2418"/><path d="M26 104 Q24 140 30 170 L22 176 Q16 140 20 110Z" fill="#3a2218"/><path d="M84 104 Q90 140 86 176 L96 176 Q98 140 92 108Z" fill="#3a2218"/><ellipse cx="43" cy="115" rx="5" ry="2" fill="#4a3028"/><ellipse cx="70" cy="117" rx="5" ry="2" fill="#4a3028"/><path d="M56 118 Q53 130 52 132 Q56 135 60 132" fill="none" stroke="#c8a090" stroke-width="1.2"/><ellipse cx="57" cy="146" rx="7" ry="2.5" fill="#b88078"/><path d="M34 146 Q56 172 82 146 L88 176 Q92 190 90 200 H30 Q28 186 32 176Z" fill="#e2bcae"/><path d="M-5 215 V176 Q8 165 26 172 Q40 196 58 200 Q78 196 94 172 Q112 168 126 180 V215 Z" fill="#eeecf0"/><path d="M26 172 Q40 196 58 200 Q78 196 94 172" fill="none" stroke="#e0b8c8" stroke-width="1.2"/></g><path d="M57 186 V197 M54 189.5 H60" stroke="#7a6a64" stroke-width="1.3"/><path d="M50 213 L54 208" stroke="#c03050" stroke-width="2"/></g></svg>
<div class="a" style="left:1538px;top:594px;width:147px;height:24px;background:rgba(45,40,42,0.85);border-radius:5px"></div>
<svg class="a" style="left:1541px;top:598px;" width="18" height="15" viewBox="0 0 18 15"><rect x="0.5" y="10" width="3" height="5" fill="#fff"/><rect x="5.5" y="6.5" width="3" height="8.5" fill="#fff"/><rect x="10.5" y="3" width="3" height="12" fill="#fff"/><rect x="15" y="0" width="3" height="15" fill="#fff"/></svg>
<div class="t" style="left:1565px;top:599.30px;font-size:15px;color:#fff;font-weight:400;font-family:'Liberation Sans';">Олена Оглухова</div>
</body></html>
